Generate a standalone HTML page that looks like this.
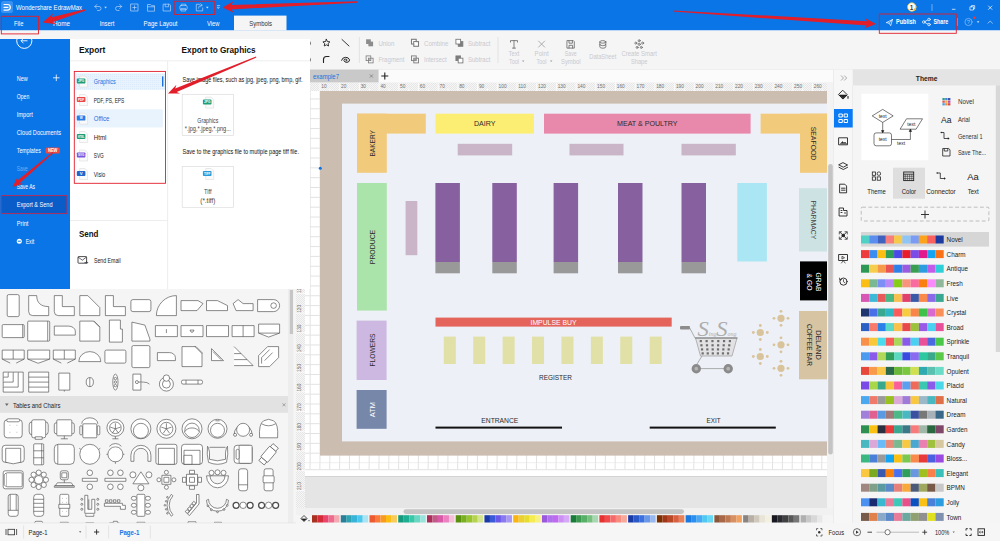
<!DOCTYPE html>
<html><head><meta charset="utf-8"><title>Wondershare EdrawMax</title>
<style>*{margin:0;padding:0}html,body{width:1000px;height:541px;overflow:hidden;background:#f5f5f5;font-family:"Liberation Sans",sans-serif}text{white-space:pre}</style>
</head><body>
<svg width="1000" height="541" viewBox="0 0 1000 541" font-family="'Liberation Sans', sans-serif" style="position:absolute;left:0;top:0;display:block">
<rect x="0.00" y="0.00" width="1000.00" height="541.00" fill="#f5f5f5"/>
<rect x="0.00" y="0.00" width="1000.00" height="30.00" fill="#0a75e7"/>
<rect x="0.00" y="30.00" width="1000.00" height="39.00" fill="#f5f5f5"/>
<rect x="0.00" y="30.00" width="1000.00" height="1.00" fill="#bcd7f6"/>
<rect x="234.00" y="15.60" width="52.50" height="14.90" fill="#f5f5f5"/>
<rect x="310.00" y="69.00" width="690.00" height="0.60" fill="#dcdcdc"/>
<rect x="305.00" y="69.60" width="528.00" height="13.00" fill="#fbfbfb"/>
<rect x="310.00" y="69.60" width="68.60" height="13.00" fill="#c9c9c9"/>
<text x="313.00" y="76.20" font-size="7" fill="#1a6fe0" textLength="26.00" lengthAdjust="spacingAndGlyphs" dominant-baseline="central">example7</text>
<path d="M369.8 74.400l3.200 3.200M373 74.400l-3.200 3.200" stroke="#666" stroke-width="0.6" fill="none"/>
<path d="M381.300 76h7M384.800 72.500v7" stroke="#222" stroke-width="1.1" fill="none"/>
<pattern id="rdot" width="2" height="2" patternUnits="userSpaceOnUse"><rect width="2" height="2" fill="#f6f6f6"/><rect width="1" height="1" fill="#e6e6e6"/><rect x="1" y="1" width="1" height="1" fill="#e6e6e6"/></pattern>
<rect x="305.00" y="82.60" width="522.00" height="8.40" fill="url(#rdot)"/>
<line x1="320.00" y1="83.00" x2="320.00" y2="91.00" stroke="#fdfdfd" stroke-width="0.9"/>
<line x1="329.85" y1="88.50" x2="329.85" y2="91.00" stroke="#fdfdfd" stroke-width="0.9"/>
<text x="321.30" y="86.40" font-size="5.3" fill="#707070" textLength="5.31" lengthAdjust="spacingAndGlyphs" dominant-baseline="central">10</text>
<line x1="339.70" y1="83.00" x2="339.70" y2="91.00" stroke="#fdfdfd" stroke-width="0.9"/>
<line x1="349.55" y1="88.50" x2="349.55" y2="91.00" stroke="#fdfdfd" stroke-width="0.9"/>
<text x="341.00" y="86.40" font-size="5.3" fill="#707070" textLength="5.31" lengthAdjust="spacingAndGlyphs" dominant-baseline="central">20</text>
<line x1="359.40" y1="83.00" x2="359.40" y2="91.00" stroke="#fdfdfd" stroke-width="0.9"/>
<line x1="369.25" y1="88.50" x2="369.25" y2="91.00" stroke="#fdfdfd" stroke-width="0.9"/>
<text x="360.70" y="86.40" font-size="5.3" fill="#707070" textLength="5.31" lengthAdjust="spacingAndGlyphs" dominant-baseline="central">30</text>
<line x1="379.10" y1="83.00" x2="379.10" y2="91.00" stroke="#fdfdfd" stroke-width="0.9"/>
<line x1="388.95" y1="88.50" x2="388.95" y2="91.00" stroke="#fdfdfd" stroke-width="0.9"/>
<text x="380.40" y="86.40" font-size="5.3" fill="#707070" textLength="5.31" lengthAdjust="spacingAndGlyphs" dominant-baseline="central">40</text>
<line x1="398.80" y1="83.00" x2="398.80" y2="91.00" stroke="#fdfdfd" stroke-width="0.9"/>
<line x1="408.65" y1="88.50" x2="408.65" y2="91.00" stroke="#fdfdfd" stroke-width="0.9"/>
<text x="400.10" y="86.40" font-size="5.3" fill="#707070" textLength="5.31" lengthAdjust="spacingAndGlyphs" dominant-baseline="central">50</text>
<line x1="418.50" y1="83.00" x2="418.50" y2="91.00" stroke="#fdfdfd" stroke-width="0.9"/>
<line x1="428.35" y1="88.50" x2="428.35" y2="91.00" stroke="#fdfdfd" stroke-width="0.9"/>
<text x="419.80" y="86.40" font-size="5.3" fill="#707070" textLength="5.31" lengthAdjust="spacingAndGlyphs" dominant-baseline="central">60</text>
<line x1="438.20" y1="83.00" x2="438.20" y2="91.00" stroke="#fdfdfd" stroke-width="0.9"/>
<line x1="448.05" y1="88.50" x2="448.05" y2="91.00" stroke="#fdfdfd" stroke-width="0.9"/>
<text x="439.50" y="86.40" font-size="5.3" fill="#707070" textLength="5.31" lengthAdjust="spacingAndGlyphs" dominant-baseline="central">70</text>
<line x1="457.90" y1="83.00" x2="457.90" y2="91.00" stroke="#fdfdfd" stroke-width="0.9"/>
<line x1="467.75" y1="88.50" x2="467.75" y2="91.00" stroke="#fdfdfd" stroke-width="0.9"/>
<text x="459.20" y="86.40" font-size="5.3" fill="#707070" textLength="5.31" lengthAdjust="spacingAndGlyphs" dominant-baseline="central">80</text>
<line x1="477.60" y1="83.00" x2="477.60" y2="91.00" stroke="#fdfdfd" stroke-width="0.9"/>
<line x1="487.45" y1="88.50" x2="487.45" y2="91.00" stroke="#fdfdfd" stroke-width="0.9"/>
<text x="478.90" y="86.40" font-size="5.3" fill="#707070" textLength="5.31" lengthAdjust="spacingAndGlyphs" dominant-baseline="central">90</text>
<line x1="497.30" y1="83.00" x2="497.30" y2="91.00" stroke="#fdfdfd" stroke-width="0.9"/>
<line x1="507.15" y1="88.50" x2="507.15" y2="91.00" stroke="#fdfdfd" stroke-width="0.9"/>
<text x="498.60" y="86.40" font-size="5.3" fill="#707070" textLength="7.96" lengthAdjust="spacingAndGlyphs" dominant-baseline="central">100</text>
<line x1="517.00" y1="83.00" x2="517.00" y2="91.00" stroke="#fdfdfd" stroke-width="0.9"/>
<line x1="526.85" y1="88.50" x2="526.85" y2="91.00" stroke="#fdfdfd" stroke-width="0.9"/>
<text x="518.30" y="86.40" font-size="5.3" fill="#707070" textLength="7.60" lengthAdjust="spacingAndGlyphs" dominant-baseline="central">110</text>
<line x1="536.70" y1="83.00" x2="536.70" y2="91.00" stroke="#fdfdfd" stroke-width="0.9"/>
<line x1="546.55" y1="88.50" x2="546.55" y2="91.00" stroke="#fdfdfd" stroke-width="0.9"/>
<text x="538.00" y="86.40" font-size="5.3" fill="#707070" textLength="7.96" lengthAdjust="spacingAndGlyphs" dominant-baseline="central">120</text>
<line x1="556.40" y1="83.00" x2="556.40" y2="91.00" stroke="#fdfdfd" stroke-width="0.9"/>
<line x1="566.25" y1="88.50" x2="566.25" y2="91.00" stroke="#fdfdfd" stroke-width="0.9"/>
<text x="557.70" y="86.40" font-size="5.3" fill="#707070" textLength="7.96" lengthAdjust="spacingAndGlyphs" dominant-baseline="central">130</text>
<line x1="576.10" y1="83.00" x2="576.10" y2="91.00" stroke="#fdfdfd" stroke-width="0.9"/>
<line x1="585.95" y1="88.50" x2="585.95" y2="91.00" stroke="#fdfdfd" stroke-width="0.9"/>
<text x="577.40" y="86.40" font-size="5.3" fill="#707070" textLength="7.96" lengthAdjust="spacingAndGlyphs" dominant-baseline="central">140</text>
<line x1="595.80" y1="83.00" x2="595.80" y2="91.00" stroke="#fdfdfd" stroke-width="0.9"/>
<line x1="605.65" y1="88.50" x2="605.65" y2="91.00" stroke="#fdfdfd" stroke-width="0.9"/>
<text x="597.10" y="86.40" font-size="5.3" fill="#707070" textLength="7.96" lengthAdjust="spacingAndGlyphs" dominant-baseline="central">150</text>
<line x1="615.50" y1="83.00" x2="615.50" y2="91.00" stroke="#fdfdfd" stroke-width="0.9"/>
<line x1="625.35" y1="88.50" x2="625.35" y2="91.00" stroke="#fdfdfd" stroke-width="0.9"/>
<text x="616.80" y="86.40" font-size="5.3" fill="#707070" textLength="7.96" lengthAdjust="spacingAndGlyphs" dominant-baseline="central">160</text>
<line x1="635.20" y1="83.00" x2="635.20" y2="91.00" stroke="#fdfdfd" stroke-width="0.9"/>
<line x1="645.05" y1="88.50" x2="645.05" y2="91.00" stroke="#fdfdfd" stroke-width="0.9"/>
<text x="636.50" y="86.40" font-size="5.3" fill="#707070" textLength="7.96" lengthAdjust="spacingAndGlyphs" dominant-baseline="central">170</text>
<line x1="654.90" y1="83.00" x2="654.90" y2="91.00" stroke="#fdfdfd" stroke-width="0.9"/>
<line x1="664.75" y1="88.50" x2="664.75" y2="91.00" stroke="#fdfdfd" stroke-width="0.9"/>
<text x="656.20" y="86.40" font-size="5.3" fill="#707070" textLength="7.96" lengthAdjust="spacingAndGlyphs" dominant-baseline="central">180</text>
<line x1="674.60" y1="83.00" x2="674.60" y2="91.00" stroke="#fdfdfd" stroke-width="0.9"/>
<line x1="684.45" y1="88.50" x2="684.45" y2="91.00" stroke="#fdfdfd" stroke-width="0.9"/>
<text x="675.90" y="86.40" font-size="5.3" fill="#707070" textLength="7.96" lengthAdjust="spacingAndGlyphs" dominant-baseline="central">190</text>
<line x1="694.30" y1="83.00" x2="694.30" y2="91.00" stroke="#fdfdfd" stroke-width="0.9"/>
<line x1="704.15" y1="88.50" x2="704.15" y2="91.00" stroke="#fdfdfd" stroke-width="0.9"/>
<text x="695.60" y="86.40" font-size="5.3" fill="#707070" textLength="7.96" lengthAdjust="spacingAndGlyphs" dominant-baseline="central">200</text>
<line x1="714.00" y1="83.00" x2="714.00" y2="91.00" stroke="#fdfdfd" stroke-width="0.9"/>
<line x1="723.85" y1="88.50" x2="723.85" y2="91.00" stroke="#fdfdfd" stroke-width="0.9"/>
<text x="715.30" y="86.40" font-size="5.3" fill="#707070" textLength="7.96" lengthAdjust="spacingAndGlyphs" dominant-baseline="central">210</text>
<line x1="733.70" y1="83.00" x2="733.70" y2="91.00" stroke="#fdfdfd" stroke-width="0.9"/>
<line x1="743.55" y1="88.50" x2="743.55" y2="91.00" stroke="#fdfdfd" stroke-width="0.9"/>
<text x="735.00" y="86.40" font-size="5.3" fill="#707070" textLength="7.96" lengthAdjust="spacingAndGlyphs" dominant-baseline="central">220</text>
<line x1="753.40" y1="83.00" x2="753.40" y2="91.00" stroke="#fdfdfd" stroke-width="0.9"/>
<line x1="763.25" y1="88.50" x2="763.25" y2="91.00" stroke="#fdfdfd" stroke-width="0.9"/>
<text x="754.70" y="86.40" font-size="5.3" fill="#707070" textLength="7.96" lengthAdjust="spacingAndGlyphs" dominant-baseline="central">230</text>
<line x1="773.10" y1="83.00" x2="773.10" y2="91.00" stroke="#fdfdfd" stroke-width="0.9"/>
<line x1="782.95" y1="88.50" x2="782.95" y2="91.00" stroke="#fdfdfd" stroke-width="0.9"/>
<text x="774.40" y="86.40" font-size="5.3" fill="#707070" textLength="7.96" lengthAdjust="spacingAndGlyphs" dominant-baseline="central">240</text>
<line x1="792.80" y1="83.00" x2="792.80" y2="91.00" stroke="#fdfdfd" stroke-width="0.9"/>
<line x1="802.65" y1="88.50" x2="802.65" y2="91.00" stroke="#fdfdfd" stroke-width="0.9"/>
<text x="794.10" y="86.40" font-size="5.3" fill="#707070" textLength="7.96" lengthAdjust="spacingAndGlyphs" dominant-baseline="central">250</text>
<line x1="812.50" y1="83.00" x2="812.50" y2="91.00" stroke="#fdfdfd" stroke-width="0.9"/>
<line x1="822.35" y1="88.50" x2="822.35" y2="91.00" stroke="#fdfdfd" stroke-width="0.9"/>
<text x="813.80" y="86.40" font-size="5.3" fill="#707070" textLength="7.96" lengthAdjust="spacingAndGlyphs" dominant-baseline="central">260</text>
<rect x="296.00" y="91.00" width="9.00" height="417.00" fill="url(#rdot)"/>
<line x1="296.00" y1="293.30" x2="305.00" y2="293.30" stroke="#fdfdfd" stroke-width="0.9"/>
<line x1="296.00" y1="313.00" x2="305.00" y2="313.00" stroke="#fdfdfd" stroke-width="0.9"/>
<line x1="296.00" y1="332.70" x2="305.00" y2="332.70" stroke="#fdfdfd" stroke-width="0.9"/>
<line x1="296.00" y1="352.40" x2="305.00" y2="352.40" stroke="#fdfdfd" stroke-width="0.9"/>
<line x1="296.00" y1="372.10" x2="305.00" y2="372.10" stroke="#fdfdfd" stroke-width="0.9"/>
<line x1="296.00" y1="391.80" x2="305.00" y2="391.80" stroke="#fdfdfd" stroke-width="0.9"/>
<line x1="296.00" y1="411.50" x2="305.00" y2="411.50" stroke="#fdfdfd" stroke-width="0.9"/>
<line x1="296.00" y1="431.20" x2="305.00" y2="431.20" stroke="#fdfdfd" stroke-width="0.9"/>
<line x1="296.00" y1="450.90" x2="305.00" y2="450.90" stroke="#fdfdfd" stroke-width="0.9"/>
<line x1="296.00" y1="470.60" x2="305.00" y2="470.60" stroke="#fdfdfd" stroke-width="0.9"/>
<line x1="296.00" y1="490.30" x2="305.00" y2="490.30" stroke="#fdfdfd" stroke-width="0.9"/>
<rect x="827.00" y="82.00" width="6.00" height="433.00" fill="#f3f3f3"/>
<rect x="828.20" y="164.00" width="4.60" height="290.50" fill="#c4c4c4" rx="2.3"/>
<rect x="296.00" y="508.00" width="537.00" height="7.00" fill="#f1f1f1"/>
<rect x="403.50" y="509.20" width="280.50" height="4.80" fill="#c4c4c4" rx="2.4"/>
<defs><pattern id="grid" x="319.5" y="452.7" width="9.84" height="9.84" patternUnits="userSpaceOnUse"><path d="M0.5 0V9.84M0 0.5H9.84" stroke="#e2e2e2" stroke-width="1" fill="none"/></pattern></defs>
<rect x="305.00" y="91.00" width="522.00" height="385.00" fill="#fff"/>
<rect x="305.00" y="91.00" width="522.00" height="385.00" fill="url(#grid)"/>
<rect x="305.00" y="463.20" width="522.00" height="12.80" fill="#fff"/>
<rect x="305.00" y="469.20" width="522.00" height="1.00" fill="#e2e2e2"/>
<rect x="309.55" y="463.20" width="1.00" height="6.00" fill="#e2e2e2"/>
<rect x="319.39" y="463.20" width="1.00" height="6.00" fill="#e2e2e2"/>
<rect x="329.23" y="463.20" width="1.00" height="6.00" fill="#e2e2e2"/>
<rect x="339.07" y="463.20" width="1.00" height="6.00" fill="#e2e2e2"/>
<rect x="348.91" y="463.20" width="1.00" height="6.00" fill="#e2e2e2"/>
<rect x="358.75" y="463.20" width="1.00" height="6.00" fill="#e2e2e2"/>
<rect x="368.59" y="463.20" width="1.00" height="6.00" fill="#e2e2e2"/>
<rect x="378.43" y="463.20" width="1.00" height="6.00" fill="#e2e2e2"/>
<rect x="388.27" y="463.20" width="1.00" height="6.00" fill="#e2e2e2"/>
<rect x="398.11" y="463.20" width="1.00" height="6.00" fill="#e2e2e2"/>
<rect x="407.95" y="463.20" width="1.00" height="6.00" fill="#e2e2e2"/>
<rect x="417.79" y="463.20" width="1.00" height="6.00" fill="#e2e2e2"/>
<rect x="427.63" y="463.20" width="1.00" height="6.00" fill="#e2e2e2"/>
<rect x="437.47" y="463.20" width="1.00" height="6.00" fill="#e2e2e2"/>
<rect x="447.31" y="463.20" width="1.00" height="6.00" fill="#e2e2e2"/>
<rect x="457.15" y="463.20" width="1.00" height="6.00" fill="#e2e2e2"/>
<rect x="466.99" y="463.20" width="1.00" height="6.00" fill="#e2e2e2"/>
<rect x="476.83" y="463.20" width="1.00" height="6.00" fill="#e2e2e2"/>
<rect x="486.67" y="463.20" width="1.00" height="6.00" fill="#e2e2e2"/>
<rect x="496.51" y="463.20" width="1.00" height="6.00" fill="#e2e2e2"/>
<rect x="506.35" y="463.20" width="1.00" height="6.00" fill="#e2e2e2"/>
<rect x="516.19" y="463.20" width="1.00" height="6.00" fill="#e2e2e2"/>
<rect x="526.03" y="463.20" width="1.00" height="6.00" fill="#e2e2e2"/>
<rect x="535.87" y="463.20" width="1.00" height="6.00" fill="#e2e2e2"/>
<rect x="545.71" y="463.20" width="1.00" height="6.00" fill="#e2e2e2"/>
<rect x="555.55" y="463.20" width="1.00" height="6.00" fill="#e2e2e2"/>
<rect x="565.39" y="463.20" width="1.00" height="6.00" fill="#e2e2e2"/>
<rect x="575.23" y="463.20" width="1.00" height="6.00" fill="#e2e2e2"/>
<rect x="585.07" y="463.20" width="1.00" height="6.00" fill="#e2e2e2"/>
<rect x="594.91" y="463.20" width="1.00" height="6.00" fill="#e2e2e2"/>
<rect x="604.75" y="463.20" width="1.00" height="6.00" fill="#e2e2e2"/>
<rect x="614.59" y="463.20" width="1.00" height="6.00" fill="#e2e2e2"/>
<rect x="624.43" y="463.20" width="1.00" height="6.00" fill="#e2e2e2"/>
<rect x="634.27" y="463.20" width="1.00" height="6.00" fill="#e2e2e2"/>
<rect x="644.11" y="463.20" width="1.00" height="6.00" fill="#e2e2e2"/>
<rect x="653.95" y="463.20" width="1.00" height="6.00" fill="#e2e2e2"/>
<rect x="663.79" y="463.20" width="1.00" height="6.00" fill="#e2e2e2"/>
<rect x="673.63" y="463.20" width="1.00" height="6.00" fill="#e2e2e2"/>
<rect x="683.47" y="463.20" width="1.00" height="6.00" fill="#e2e2e2"/>
<rect x="693.31" y="463.20" width="1.00" height="6.00" fill="#e2e2e2"/>
<rect x="703.15" y="463.20" width="1.00" height="6.00" fill="#e2e2e2"/>
<rect x="712.99" y="463.20" width="1.00" height="6.00" fill="#e2e2e2"/>
<rect x="722.83" y="463.20" width="1.00" height="6.00" fill="#e2e2e2"/>
<rect x="732.67" y="463.20" width="1.00" height="6.00" fill="#e2e2e2"/>
<rect x="742.51" y="463.20" width="1.00" height="6.00" fill="#e2e2e2"/>
<rect x="752.35" y="463.20" width="1.00" height="6.00" fill="#e2e2e2"/>
<rect x="762.19" y="463.20" width="1.00" height="6.00" fill="#e2e2e2"/>
<rect x="772.03" y="463.20" width="1.00" height="6.00" fill="#e2e2e2"/>
<rect x="781.87" y="463.20" width="1.00" height="6.00" fill="#e2e2e2"/>
<rect x="791.71" y="463.20" width="1.00" height="6.00" fill="#e2e2e2"/>
<rect x="801.55" y="463.20" width="1.00" height="6.00" fill="#e2e2e2"/>
<rect x="811.39" y="463.20" width="1.00" height="6.00" fill="#e2e2e2"/>
<rect x="821.23" y="463.20" width="1.00" height="6.00" fill="#e2e2e2"/>
<rect x="305.00" y="476.00" width="522.00" height="32.00" fill="#e5e5e5"/>
<rect x="305.00" y="476.00" width="522.00" height="0.80" fill="#d0d0d0"/>
<rect x="320.00" y="91.00" width="507.00" height="364.60" fill="#cbbdb0"/>
<rect x="342.00" y="103.60" width="485.00" height="337.80" fill="#edf0f6"/>
<rect x="357.00" y="113.70" width="68.80" height="19.90" fill="#f2ca7c"/>
<rect x="357.00" y="113.70" width="29.80" height="59.10" fill="#f2ca7c"/>
<rect x="435.50" y="113.70" width="98.50" height="19.90" fill="#fcee72"/>
<rect x="544.00" y="113.70" width="206.60" height="19.90" fill="#e888ab"/>
<rect x="760.60" y="113.70" width="66.40" height="19.90" fill="#f2ca7c"/>
<rect x="800.00" y="113.70" width="27.00" height="59.10" fill="#f2ca7c"/>
<rect x="457.70" y="143.80" width="54.50" height="11.60" fill="#cab4c8"/>
<rect x="569.50" y="143.80" width="54.00" height="11.60" fill="#cab4c8"/>
<rect x="681.50" y="143.80" width="54.30" height="11.60" fill="#cab4c8"/>
<rect x="357.00" y="183.00" width="29.80" height="127.60" fill="#abe4ab"/>
<rect x="405.60" y="201.00" width="11.70" height="54.20" fill="#cab4c8"/>
<rect x="435.40" y="183.00" width="24.50" height="79.00" fill="#87609f"/>
<rect x="435.40" y="262.00" width="24.50" height="11.30" fill="#999"/>
<rect x="492.30" y="183.00" width="24.50" height="79.00" fill="#87609f"/>
<rect x="492.30" y="262.00" width="24.50" height="11.30" fill="#999"/>
<rect x="553.60" y="183.00" width="24.50" height="79.00" fill="#87609f"/>
<rect x="553.60" y="262.00" width="24.50" height="11.30" fill="#999"/>
<rect x="618.00" y="183.00" width="24.50" height="79.00" fill="#87609f"/>
<rect x="618.00" y="262.00" width="24.50" height="11.30" fill="#999"/>
<rect x="681.50" y="183.00" width="24.50" height="79.00" fill="#87609f"/>
<rect x="681.50" y="262.00" width="24.50" height="11.30" fill="#999"/>
<rect x="737.30" y="183.00" width="29.60" height="78.50" fill="#abe6f4"/>
<rect x="799.00" y="188.20" width="28.00" height="63.30" fill="#cde3e3"/>
<rect x="800.00" y="261.40" width="27.00" height="39.00" fill="#000"/>
<rect x="799.00" y="311.00" width="28.00" height="68.30" fill="#d6c4a2"/>
<rect x="356.60" y="320.60" width="30.00" height="59.40" fill="#cdb8e2"/>
<rect x="356.60" y="390.00" width="30.00" height="38.80" fill="#7687a9"/>
<rect x="435.50" y="317.60" width="236.20" height="9.00" fill="#e4645b"/>
<rect x="443.80" y="336.60" width="12.00" height="27.40" fill="#e1e0a6"/>
<rect x="473.21" y="336.60" width="12.00" height="27.40" fill="#e1e0a6"/>
<rect x="502.62" y="336.60" width="12.00" height="27.40" fill="#e1e0a6"/>
<rect x="532.03" y="336.60" width="12.00" height="27.40" fill="#e1e0a6"/>
<rect x="561.44" y="336.60" width="12.00" height="27.40" fill="#e1e0a6"/>
<rect x="590.85" y="336.60" width="12.00" height="27.40" fill="#e1e0a6"/>
<rect x="620.26" y="336.60" width="12.00" height="27.40" fill="#e1e0a6"/>
<rect x="649.67" y="336.60" width="12.00" height="27.40" fill="#e1e0a6"/>
<rect x="435.50" y="426.60" width="126.50" height="2.00" fill="#111"/>
<rect x="649.70" y="426.60" width="126.10" height="2.00" fill="#111"/>
<text x="484.70" y="123.60" font-size="7.5" fill="#2b2b2b" textLength="21.50" lengthAdjust="spacingAndGlyphs" dominant-baseline="central" text-anchor="middle">DAIRY</text>
<text x="647.30" y="123.60" font-size="7.5" fill="#2b2b2b" textLength="60.50" lengthAdjust="spacingAndGlyphs" dominant-baseline="central" text-anchor="middle">MEAT &amp; POULTRY</text>
<text x="372.30" y="143.30" font-size="7.5" fill="#2b2b2b" textLength="26.40" lengthAdjust="spacingAndGlyphs" dominant-baseline="central" text-anchor="middle" transform="rotate(-90 372.30 143.30)">BAKERY</text>
<text x="813.50" y="143.50" font-size="7.5" fill="#2b2b2b" textLength="33.70" lengthAdjust="spacingAndGlyphs" dominant-baseline="central" text-anchor="middle" transform="rotate(90 813.50 143.50)">SEAFOOD</text>
<text x="372.30" y="247.00" font-size="7.5" fill="#2b2b2b" textLength="34.40" lengthAdjust="spacingAndGlyphs" dominant-baseline="central" text-anchor="middle" transform="rotate(-90 372.30 247.00)">PRODUCE</text>
<text x="813.50" y="219.90" font-size="7.5" fill="#444" textLength="38.80" lengthAdjust="spacingAndGlyphs" dominant-baseline="central" text-anchor="middle" transform="rotate(90 813.50 219.90)">PHARMACY</text>
<text x="372.30" y="350.00" font-size="7.5" fill="#2b2b2b" textLength="33.00" lengthAdjust="spacingAndGlyphs" dominant-baseline="central" text-anchor="middle" transform="rotate(-90 372.30 350.00)">FLOWERS</text>
<text x="372.30" y="409.70" font-size="7.5" fill="#fff" textLength="15.00" lengthAdjust="spacingAndGlyphs" dominant-baseline="central" text-anchor="middle" transform="rotate(-90 372.30 409.70)">ATM</text>
<text x="553.50" y="322.20" font-size="7" fill="#fff" textLength="46.00" lengthAdjust="spacingAndGlyphs" dominant-baseline="central" text-anchor="middle">IMPULSE BUY</text>
<text x="555.50" y="377.00" font-size="7" fill="#2b2b2b" textLength="33.00" lengthAdjust="spacingAndGlyphs" dominant-baseline="central" text-anchor="middle">REGISTER</text>
<text x="499.80" y="420.50" font-size="7" fill="#2b2b2b" textLength="37.00" lengthAdjust="spacingAndGlyphs" dominant-baseline="central" text-anchor="middle">ENTRANCE</text>
<text x="713.50" y="420.50" font-size="7" fill="#2b2b2b" textLength="14.00" lengthAdjust="spacingAndGlyphs" dominant-baseline="central" text-anchor="middle">EXIT</text>
<text x="818.50" y="282.00" font-size="7" fill="#fff" textLength="19.00" lengthAdjust="spacingAndGlyphs" dominant-baseline="central" text-anchor="middle" transform="rotate(90 818.50 282.00)">GRAB</text>
<text x="809.30" y="282.00" font-size="7" fill="#fff" textLength="17.00" lengthAdjust="spacingAndGlyphs" dominant-baseline="central" text-anchor="middle" transform="rotate(90 809.30 282.00)">&amp; GO</text>
<text x="818.50" y="345.00" font-size="7.2" fill="#2b2b2b" textLength="29.70" lengthAdjust="spacingAndGlyphs" dominant-baseline="central" text-anchor="middle" transform="rotate(90 818.50 345.00)">DELAND</text>
<text x="809.20" y="345.00" font-size="7.2" fill="#2b2b2b" textLength="42.00" lengthAdjust="spacingAndGlyphs" dominant-baseline="central" text-anchor="middle" transform="rotate(90 809.20 345.00)">COFFEE BAR</text>
<circle cx="760.30" cy="332.50" r="3.60" fill="#d9c39a"/>
<circle cx="753.30" cy="332.50" r="1.40" fill="#d9c39a"/>
<circle cx="767.30" cy="332.50" r="1.40" fill="#d9c39a"/>
<circle cx="760.30" cy="325.50" r="1.40" fill="#d9c39a"/>
<circle cx="760.30" cy="339.50" r="1.40" fill="#d9c39a"/>
<circle cx="760.30" cy="356.50" r="3.60" fill="#d9c39a"/>
<circle cx="753.30" cy="356.50" r="1.40" fill="#d9c39a"/>
<circle cx="767.30" cy="356.50" r="1.40" fill="#d9c39a"/>
<circle cx="760.30" cy="349.50" r="1.40" fill="#d9c39a"/>
<circle cx="760.30" cy="363.50" r="1.40" fill="#d9c39a"/>
<circle cx="781.00" cy="318.30" r="3.60" fill="#d9c39a"/>
<circle cx="774.00" cy="318.30" r="1.40" fill="#d9c39a"/>
<circle cx="788.00" cy="318.30" r="1.40" fill="#d9c39a"/>
<circle cx="781.00" cy="311.30" r="1.40" fill="#d9c39a"/>
<circle cx="781.00" cy="325.30" r="1.40" fill="#d9c39a"/>
<circle cx="781.00" cy="344.80" r="3.60" fill="#d9c39a"/>
<circle cx="774.00" cy="344.80" r="1.40" fill="#d9c39a"/>
<circle cx="788.00" cy="344.80" r="1.40" fill="#d9c39a"/>
<circle cx="781.00" cy="337.80" r="1.40" fill="#d9c39a"/>
<circle cx="781.00" cy="351.80" r="1.40" fill="#d9c39a"/>
<circle cx="781.00" cy="368.30" r="3.60" fill="#d9c39a"/>
<circle cx="774.00" cy="368.30" r="1.40" fill="#d9c39a"/>
<circle cx="788.00" cy="368.30" r="1.40" fill="#d9c39a"/>
<circle cx="781.00" cy="361.30" r="1.40" fill="#d9c39a"/>
<circle cx="781.00" cy="375.30" r="1.40" fill="#d9c39a"/>
<rect x="680.00" y="326.00" width="10.00" height="3.60" fill="#8c8c8c" rx="1"/>
<path d="M689.500 327.500l5.500 10.500M702 356l-5 8M696 368.600h32" stroke="#999" stroke-width="0.8" fill="none"/>
<path d="M695.500 338h41.500l-5 18h-31.500z" stroke="#9a9a9a" stroke-width="0.7" fill="#e2e2e4"/>
<path d="M695 338h42.500" stroke="#7a7a7a" stroke-width="1.2" fill="none"/>
<rect x="699.70" y="340.00" width="2.20" height="2.20" fill="#6e6e6e"/>
<rect x="705.52" y="340.00" width="2.20" height="2.20" fill="#6e6e6e"/>
<rect x="711.34" y="340.00" width="2.20" height="2.20" fill="#6e6e6e"/>
<rect x="717.16" y="340.00" width="2.20" height="2.20" fill="#6e6e6e"/>
<rect x="722.98" y="340.00" width="2.20" height="2.20" fill="#6e6e6e"/>
<rect x="728.80" y="340.00" width="2.20" height="2.20" fill="#6e6e6e"/>
<rect x="700.32" y="344.20" width="2.20" height="2.20" fill="#6e6e6e"/>
<rect x="705.89" y="344.20" width="2.20" height="2.20" fill="#6e6e6e"/>
<rect x="711.46" y="344.20" width="2.20" height="2.20" fill="#6e6e6e"/>
<rect x="717.03" y="344.20" width="2.20" height="2.20" fill="#6e6e6e"/>
<rect x="722.60" y="344.20" width="2.20" height="2.20" fill="#6e6e6e"/>
<rect x="728.17" y="344.20" width="2.20" height="2.20" fill="#6e6e6e"/>
<rect x="700.95" y="348.30" width="2.20" height="2.20" fill="#6e6e6e"/>
<rect x="706.27" y="348.30" width="2.20" height="2.20" fill="#6e6e6e"/>
<rect x="711.59" y="348.30" width="2.20" height="2.20" fill="#6e6e6e"/>
<rect x="716.91" y="348.30" width="2.20" height="2.20" fill="#6e6e6e"/>
<rect x="722.23" y="348.30" width="2.20" height="2.20" fill="#6e6e6e"/>
<rect x="727.55" y="348.30" width="2.20" height="2.20" fill="#6e6e6e"/>
<rect x="701.57" y="352.30" width="2.20" height="2.20" fill="#6e6e6e"/>
<rect x="706.64" y="352.30" width="2.20" height="2.20" fill="#6e6e6e"/>
<rect x="711.71" y="352.30" width="2.20" height="2.20" fill="#6e6e6e"/>
<rect x="716.78" y="352.30" width="2.20" height="2.20" fill="#6e6e6e"/>
<rect x="721.85" y="352.30" width="2.20" height="2.20" fill="#6e6e6e"/>
<rect x="726.92" y="352.30" width="2.20" height="2.20" fill="#6e6e6e"/>
<circle cx="696.30" cy="368.70" r="4.70" fill="#8a8a8a"/>
<circle cx="696.30" cy="368.70" r="1.90" fill="#b4b4b4"/>
<circle cx="728.20" cy="368.70" r="4.70" fill="#8a8a8a"/>
<circle cx="728.20" cy="368.70" r="1.90" fill="#b4b4b4"/>
<text x="697.500" y="335.500" font-size="21" fill="#adadad" font-family="'Liberation Serif', serif" font-style="italic" textLength="39" lengthAdjust="spacingAndGlyphs">S<tspan font-size="5.500">ing</tspan>S<tspan font-size="5.500">ong</tspan></text>
<circle cx="320.30" cy="168.30" r="1.50" fill="#0b73e5"/>
<text x="16.00" y="7.50" font-size="7.2" fill="#fff" textLength="66.00" lengthAdjust="spacingAndGlyphs" dominant-baseline="central">Wondershare EdrawMax</text>
<text x="14.00" y="23.30" font-size="7.2" fill="#fff" textLength="9.40" lengthAdjust="spacingAndGlyphs" dominant-baseline="central">File</text>
<text x="53.00" y="23.30" font-size="7.2" fill="#fff" textLength="17.00" lengthAdjust="spacingAndGlyphs" dominant-baseline="central">Home</text>
<text x="99.70" y="23.30" font-size="7.2" fill="#fff" textLength="14.80" lengthAdjust="spacingAndGlyphs" dominant-baseline="central">Insert</text>
<text x="143.50" y="23.30" font-size="7.2" fill="#fff" textLength="34.00" lengthAdjust="spacingAndGlyphs" dominant-baseline="central">Page Layout</text>
<text x="207.00" y="23.30" font-size="7.2" fill="#fff" textLength="12.50" lengthAdjust="spacingAndGlyphs" dominant-baseline="central">View</text>
<text x="249.30" y="23.30" font-size="7.2" fill="#333" textLength="22.70" lengthAdjust="spacingAndGlyphs" dominant-baseline="central">Symbols</text>
<text x="896.00" y="21.80" font-size="7" fill="#fff" textLength="20.00" lengthAdjust="spacingAndGlyphs" dominant-baseline="central" font-weight="bold">Publish</text>
<text x="933.50" y="21.80" font-size="7" fill="#fff" textLength="14.80" lengthAdjust="spacingAndGlyphs" dominant-baseline="central" font-weight="bold">Share</text>
<g fill="none" stroke="#b6d4f8" stroke-width="0.7" stroke-linecap="round" stroke-linejoin="round">
<rect x="1" y="1" width="12" height="12" rx="2.500" fill="#3a93f2" stroke="none"/>
<path d="M4 4.500h3.500a2.800 2.800 0 0 1 0 5.600H4M4 7.300h4" stroke="#fff" stroke-width="1.200"/>
<path d="M95 6.500h4a2 2 0 0 1 0 4h-1.500M96.800 4.500l-2 2l2 2"/>
<path d="M104.300 6.800h2.600l-1.300 1.600z" fill="#d4e6fb" stroke="none"/>
<path d="M121.500 6.500h-4a2 2 0 0 0 0 4h1.500M119.700 4.500l2 2l-2 2"/>
<rect x="131" y="4" width="7" height="7"/><path d="M134.500 5.800v3.400M132.800 7.500h3.400"/>
<path d="M147.500 10.800v-6.300h3l1 1.200h3v5.100zM147.500 6.800h7"/>
<path d="M163.500 4.200h6l1 1v5.800h-7zM165.200 4.200v2.600h3.400v-2.600"/>
<rect x="179.800" y="5.600" width="7.400" height="4" rx="1.200"/><path d="M181.300 5.600v-1.400h4.400v1.400M181.300 8.400h4.400v2.600h-4.400z"/>
<path d="M199.500 4.300h-3.200v6.600h6.400v-3M198.600 8.200c0-2 1.200-3 3.400-3M200.600 3.800l1.600 1.400l-1.600 1.400"/>
<path d="M206 6.800h2.600l-1.300 1.600z" fill="#d4e6fb" stroke="none"/>
<path d="M217.300 5.500h2.400M217.600 7.200h1.800l-0.900 1.200z" stroke-width="0.700"/>
<circle cx="911.800" cy="7" r="4.200" fill="#fff" stroke="#f3c34a" stroke-width="0.800"/>
<path d="M914 8l2.500 1.500l-2.500 1.500z" fill="#f3b73a" stroke="none"/>
<path d="M932 4.500v6" stroke-width="0.600"/>
<path d="M952.300 9.300h2.800" stroke="#fff"/>
<rect x="970.300" y="6.800" width="3.200" height="3.200" stroke="#fff" stroke-width="0.700"/><path d="M971.500 6.800v-1.200h3.200v3.200h-1.200" stroke="#fff" stroke-width="0.700"/>
<path d="M988.500 6l3.400 3.400M991.900 6l-3.400 3.400" stroke="#fff"/>
<path d="M886.500 22.500l6-3l-1.800 6.200l-1.600-2.400zM889.100 23.300l3.400-3.800" stroke="#fff" stroke-width="0.700"/>
<circle cx="923.800" cy="22" r="1.300" stroke="#fff" stroke-width="0.700"/><circle cx="929" cy="19.500" r="1.300" stroke="#fff" stroke-width="0.700"/><circle cx="929" cy="24.500" r="1.300" stroke="#fff" stroke-width="0.700"/><path d="M925 21.400l2.800-1.400M925 22.600l2.800 1.400" stroke="#fff" stroke-width="0.700"/>
<path d="M957.300 18.500v7" stroke-width="0.500"/>
<circle cx="968.500" cy="22" r="3.600" stroke="#8fc0f6" stroke-width="0.700"/>
<circle cx="974.500" cy="17.800" r="1.200" fill="#f03a3a" stroke="none"/>
<path d="M976.800 21.300h2.600l-1.300 1.600z" fill="#d4e6fb" stroke="none"/>
<path d="M988 23.200l2.200-2.200l2.200 2.200" stroke-width="0.800"/>
</g>
<text x="968.50" y="22.20" font-size="6" fill="#8fc0f6" textLength="3.34" lengthAdjust="spacingAndGlyphs" dominant-baseline="central" text-anchor="middle">?</text>
<text x="911.60" y="7.20" font-size="6.5" fill="#333" textLength="3.62" lengthAdjust="spacingAndGlyphs" dominant-baseline="central" font-weight="bold" text-anchor="middle">1</text>
<g fill="none" stroke="#222" stroke-width="0.9" stroke-linejoin="round" stroke-linecap="round">
<path d="M326.400 39.300l1.050 2.250l2.450 0.300l-1.800 1.700l0.450 2.450l-2.150-1.200l-2.150 1.200l0.450-2.450l-1.800-1.700l2.450-0.300z"/>
<path d="M342 39.500l7 6.500"/>
<path d="M323.500 62.500v-3a3 3 0 0 1 3-3h2.500" stroke-width="1.100"/>
<path d="M341.600 60.300a4.100 3.500 0 0 1 8 -0.400a2.900 2.600 0 0 1 -5.700 0.500a1.700 1.500 0 0 1 3.300 -0.300a0.800 0.700 0 0 1 -1.500 0.200" stroke-width="1"/>
<path d="M308.700 41a2.500 2.500 0 0 1 0 4.500M308.700 57.500a2.500 2.500 0 0 1 0 4.500" stroke-width="1.100"/>
</g>
<line x1="359.40" y1="37.00" x2="359.40" y2="63.00" stroke="#ddd" stroke-width="0.7"/>
<line x1="498.00" y1="37.00" x2="498.00" y2="63.00" stroke="#ddd" stroke-width="0.7"/>
<rect x="366.10" y="39.30" width="4.70" height="4.70" fill="#8c8c8c"/>
<rect x="368.40" y="41.60" width="4.70" height="4.70" fill="#8c8c8c"/>
<rect x="366.10" y="55.90" width="4.70" height="4.70" fill="none" stroke="#7c7c7c" stroke-width="0.8"/>
<rect x="368.40" y="58.20" width="4.70" height="4.70" fill="none" stroke="#7c7c7c" stroke-width="0.8"/>
<line x1="368.40" y1="60.60" x2="370.80" y2="58.20" stroke="#7c7c7c" stroke-width="0.6"/>
<rect x="411.50" y="39.30" width="4.70" height="4.70" fill="#fff" stroke="#7c7c7c" stroke-width="1.1"/>
<rect x="413.80" y="41.60" width="4.70" height="4.70" fill="#fff" stroke="#7c7c7c" stroke-width="1.1"/>
<rect x="414.40" y="42.20" width="1.20" height="1.20" fill="#fff"/>
<rect x="411.50" y="55.90" width="4.70" height="4.70" fill="none" stroke="#7c7c7c" stroke-width="0.9"/>
<rect x="413.80" y="58.20" width="4.70" height="4.70" fill="none" stroke="#7c7c7c" stroke-width="0.9"/>
<rect x="413.80" y="58.20" width="2.40" height="2.40" fill="#999"/>
<rect x="458.20" y="41.60" width="4.70" height="4.70" fill="#7c7c7c" stroke="#7c7c7c" stroke-width="0.8"/>
<rect x="455.90" y="39.30" width="4.70" height="4.70" fill="#fff" stroke="#7c7c7c" stroke-width="0.9"/>
<rect x="455.90" y="55.90" width="4.70" height="4.70" fill="#7c7c7c" stroke="#7c7c7c" stroke-width="0.8"/>
<rect x="458.20" y="58.20" width="4.70" height="4.70" fill="#fff" stroke="#7c7c7c" stroke-width="0.9"/>
<text x="378.40" y="43.00" font-size="7" fill="#c9c9cf" textLength="16.00" lengthAdjust="spacingAndGlyphs" dominant-baseline="central">Union</text>
<text x="378.40" y="59.60" font-size="7" fill="#c9c9cf" textLength="26.00" lengthAdjust="spacingAndGlyphs" dominant-baseline="central">Fragment</text>
<text x="424.00" y="43.00" font-size="7" fill="#c9c9cf" textLength="24.40" lengthAdjust="spacingAndGlyphs" dominant-baseline="central">Combine</text>
<text x="424.00" y="59.60" font-size="7" fill="#c9c9cf" textLength="22.60" lengthAdjust="spacingAndGlyphs" dominant-baseline="central">Intersect</text>
<text x="468.00" y="43.00" font-size="7" fill="#c9c9cf" textLength="22.40" lengthAdjust="spacingAndGlyphs" dominant-baseline="central">Subtract</text>
<text x="468.00" y="59.60" font-size="7" fill="#c9c9cf" textLength="22.40" lengthAdjust="spacingAndGlyphs" dominant-baseline="central">Subtract</text>
<text x="514.00" y="53.20" font-size="6.6" fill="#c9c9cf" textLength="11.00" lengthAdjust="spacingAndGlyphs" dominant-baseline="central" text-anchor="middle">Text</text>
<text x="514.00" y="61.20" font-size="6.6" fill="#c9c9cf" textLength="10.00" lengthAdjust="spacingAndGlyphs" dominant-baseline="central" text-anchor="middle">Tool</text>
<text x="541.60" y="53.20" font-size="6.6" fill="#c9c9cf" textLength="14.00" lengthAdjust="spacingAndGlyphs" dominant-baseline="central" text-anchor="middle">Point</text>
<text x="541.60" y="61.20" font-size="6.6" fill="#c9c9cf" textLength="10.00" lengthAdjust="spacingAndGlyphs" dominant-baseline="central" text-anchor="middle">Tool</text>
<text x="570.80" y="53.20" font-size="6.6" fill="#c9c9cf" textLength="12.00" lengthAdjust="spacingAndGlyphs" dominant-baseline="central" text-anchor="middle">Save</text>
<text x="570.80" y="61.20" font-size="6.6" fill="#c9c9cf" textLength="19.50" lengthAdjust="spacingAndGlyphs" dominant-baseline="central" text-anchor="middle">Symbol</text>
<text x="602.80" y="56.40" font-size="6.6" fill="#c9c9cf" textLength="27.00" lengthAdjust="spacingAndGlyphs" dominant-baseline="central" text-anchor="middle">DataSheet</text>
<text x="639.20" y="53.20" font-size="6.6" fill="#c9c9cf" textLength="35.50" lengthAdjust="spacingAndGlyphs" dominant-baseline="central" text-anchor="middle">Create Smart</text>
<text x="639.20" y="61.20" font-size="6.6" fill="#c9c9cf" textLength="16.50" lengthAdjust="spacingAndGlyphs" dominant-baseline="central" text-anchor="middle">Shape</text>
<path d="M522 60.600h2.400l-1.200 1.500z" stroke="none" stroke-width="0.7" fill="#999"/>
<path d="M550 60.600h2.400l-1.200 1.500z" stroke="none" stroke-width="0.7" fill="#999"/>
<g transform="translate(0 1.100)" fill="none" stroke="#666" stroke-width="0.800" stroke-linecap="round" stroke-linejoin="round">
<path d="M510.500 41v-1.500h7v1.500M514 39.500v7.500M512.500 47h3"/>
<path d="M538.600 40l6 6M544.600 40l-6 6" stroke="#999"/>
<path d="M567.300 39.500h6l1 1v6.500h-7zM569 39.500v2.600h3.400v-2.600M569 47v-2.800h3.600v2.800"/>
<ellipse cx="602.800" cy="40.800" rx="3" ry="1.300"/><path d="M599.800 40.800v5a3 1.300 0 0 0 6 0v-5M599.800 43.300a3 1.300 0 0 0 6 0"/>
<circle cx="639.200" cy="43.200" r="1.100"/><circle cx="639.200" cy="39.600" r="1"/><circle cx="642.600" cy="42" r="1"/><circle cx="635.800" cy="42" r="1"/><circle cx="641.300" cy="46.300" r="1"/><circle cx="637.100" cy="46.300" r="1"/>
</g>
<rect x="833.00" y="69.60" width="167.00" height="453.40" fill="#f5f5f5"/>
<rect x="834.00" y="69.60" width="18.70" height="453.40" fill="#f7f7f7"/>
<rect x="852.30" y="85.40" width="0.60" height="437.60" fill="#e6e6e6"/>
<rect x="833.20" y="69.60" width="0.60" height="453.40" fill="#e6e6e6"/>
<rect x="852.70" y="69.60" width="147.30" height="15.80" fill="#e4e4e4"/>
<text x="926.60" y="78.40" font-size="7.8" fill="#222" textLength="21.60" lengthAdjust="spacingAndGlyphs" dominant-baseline="central" font-weight="bold" text-anchor="middle">Theme</text>
<path d="M841 75.500l2.500 2.500l-2.500 2.500M844.200 75.500l2.500 2.500l-2.500 2.500" stroke="#888" stroke-width="0.7" fill="none"/>
<rect x="834.00" y="109.00" width="18.70" height="18.50" fill="#0a7af5"/>
<g fill="none" stroke="#222" stroke-width="0.9" stroke-linejoin="round" stroke-linecap="round">
<path d="M843 90.500l4.300 4.300l-4.300 4.300l-4.300-4.300zM839.500 95.500h7" /><path d="M839.800 95.200h6.600l-3.400 3.400z" fill="#222"/><path d="M848 96.500v1.800" stroke-width="1.100"/>
<g stroke="#fff" stroke-width="1"><rect x="839.300" y="114" width="3" height="3"/><rect x="844.500" y="114" width="3" height="3"/><rect x="839.300" y="119.500" width="3" height="3"/><rect x="844.500" y="119.500" width="3" height="3"/></g>
<rect x="839" y="137.800" width="8.500" height="7"/><path d="M840.500 143.500l2-2l1.500 1.500l1-1l1.500 1.500z" fill="#222" stroke-width="0.400"/>
<g transform="translate(0 3.300)"><path d="M843.300 159.500l4.300 2.200l-4.300 2.200l-4.300-2.200zM839 164l4.300 2.200l4.300-2.200"/></g>
<g transform="translate(0 4.200)"><path d="M840 180h4.800l1.800 1.800v6.800h-6.600zM841.500 184h3.600M841.500 186h3.600"/></g>
<g transform="translate(0 9)"><path d="M839.500 199h4v2.500h3.500v5.500h-7.500zM841 201.500h1M841 203.500h1M844.500 204h1"/></g>
<g transform="translate(0 9.200)"><path d="M840 223l6.500 6.500M846.500 223l-6.500 6.500"/><circle cx="843.250" cy="226.250" r="1.300" fill="#222"/><path d="M839.300 224.800v-2.300h2.300M845 222.500h2.300v2.300M847.300 227.800v2.300h-2.300M841.600 230.100h-2.300v-2.300" stroke-width="0.700"/></g>
<g transform="translate(0 10)"><rect x="839" y="244.500" width="8.500" height="6"/><path d="M841.500 253l1.800-2.400l1.800 2.400M842.300 246.500l2.200 1.200l-2.200 1.200z" stroke-width="0.700"/></g>
<g transform="translate(0 11.600)"><circle cx="843.500" cy="270" r="3.600"/><path d="M843.500 268v2.200l1.500 1M839.500 266.500l0.200 2l1.800-0.500" stroke-width="0.700"/></g>
</g>
<rect x="861.40" y="93.70" width="66.90" height="66.50" fill="#fff"/>
<g fill="#fff" stroke="#222" stroke-width="0.600" stroke-linejoin="round">
<path d="M882.700 109.400l10.500 6.500l-10.500 6.500l-10.500-6.500z"/>
<rect x="874" y="132.900" width="17.500" height="12.900" rx="2.200"/>
<path d="M906.500 118.800h16l-6.400 10.400h-16z"/>
<path d="M882.700 122.400v8.500M891.500 139.500h18.900v-8.500" fill="none"/>
<path d="M881.500 130.500h2.400l-1.200 2.400zM909.200 131.500h2.400l-1.200-2.500z" fill="#222"/>
</g>
<text x="882.70" y="115.90" font-size="5.2" fill="#222" textLength="8.00" lengthAdjust="spacingAndGlyphs" dominant-baseline="central" text-anchor="middle">text</text>
<text x="911.30" y="124.00" font-size="5.2" fill="#222" textLength="8.00" lengthAdjust="spacingAndGlyphs" dominant-baseline="central" text-anchor="middle">text</text>
<text x="882.70" y="139.40" font-size="5.2" fill="#222" textLength="8.00" lengthAdjust="spacingAndGlyphs" dominant-baseline="central" text-anchor="middle">text</text>
<text x="901.10" y="143.00" font-size="5.2" fill="#222" textLength="8.00" lengthAdjust="spacingAndGlyphs" dominant-baseline="central" text-anchor="middle">text</text>
<rect x="942.40" y="98.00" width="2.40" height="2.20" fill="#2f9e8f"/>
<rect x="945.20" y="98.00" width="2.40" height="2.20" fill="#4a7de0"/>
<rect x="948.00" y="98.00" width="2.40" height="2.20" fill="#3a55b0"/>
<rect x="942.40" y="100.60" width="2.40" height="2.20" fill="#e05a5a"/>
<rect x="945.20" y="100.60" width="2.40" height="2.20" fill="#f0b040"/>
<rect x="948.00" y="100.60" width="2.40" height="2.20" fill="#c04aa0"/>
<rect x="942.40" y="103.20" width="2.40" height="2.20" fill="#4aa0e0"/>
<rect x="945.20" y="103.20" width="2.40" height="2.20" fill="#f08a30"/>
<rect x="948.00" y="103.20" width="2.40" height="2.20" fill="#d04a4a"/>
<text x="957.90" y="101.90" font-size="7" fill="#333" textLength="16.00" lengthAdjust="spacingAndGlyphs" dominant-baseline="central">Novel</text>
<text x="941.00" y="119.60" font-size="9" fill="#222" textLength="10.50" lengthAdjust="spacingAndGlyphs" dominant-baseline="central">Aa</text>
<text x="957.90" y="119.40" font-size="7" fill="#333" textLength="12.00" lengthAdjust="spacingAndGlyphs" dominant-baseline="central">Arial</text>
<path d="M941.500 132.500h2.500v6h4.500" stroke="#222" stroke-width="0.8" fill="none"/>
<path d="M947.800 137.300l1.800 1.200l-1.800 1.200z" stroke="none" stroke-width="0.7" fill="#222"/>
<circle cx="941.30" cy="132.50" r="0.80" fill="#222"/>
<text x="957.90" y="136.00" font-size="7" fill="#333" textLength="24.70" lengthAdjust="spacingAndGlyphs" dominant-baseline="central">General 1</text>
<path d="M942.700 148.500h6l1.300 1.300v6.200h-7.300zM944.200 148.500v2.500h3.600v-2.500" stroke="#222" stroke-width="0.8" fill="none"/>
<text x="957.90" y="152.50" font-size="7" fill="#333" textLength="28.20" lengthAdjust="spacingAndGlyphs" dominant-baseline="central">Save The...</text>
<rect x="893.00" y="167.70" width="32.00" height="31.00" fill="#dedede"/>
<g fill="none" stroke="#222" stroke-width="0.8">
<rect x="872.300" y="172" width="3.300" height="3.300"/><rect x="877.200" y="172" width="3.300" height="3.300" rx="1.200"/><rect x="872.300" y="176.900" width="3.300" height="3.300"/><rect x="877.200" y="176.900" width="3.300" height="3.300"/>
<rect x="903.700" y="172" width="10" height="8.600" stroke-width="0.900"/><path d="M903.700 174.200h10" /><path d="M905.300 174.200v6.400M907.400 174.200v6.400M909.600 174.200v6.400M911.800 174.200v6.400M903.700 176.300h10M903.700 178.500h10" stroke-width="0.500"/>
<path d="M937.500 173h2.800v5.500h4.200"/>
</g>
<path d="M944 177.300l1.800 1.200l-1.800 1.200z" stroke="none" stroke-width="0.7" fill="#222"/>
<circle cx="937.20" cy="173.00" r="0.80" fill="#222"/>
<text x="973.00" y="176.00" font-size="9.5" fill="#222" textLength="11.50" lengthAdjust="spacingAndGlyphs" dominant-baseline="central" text-anchor="middle">Aa</text>
<text x="876.60" y="191.20" font-size="7" fill="#222" textLength="18.50" lengthAdjust="spacingAndGlyphs" dominant-baseline="central" text-anchor="middle">Theme</text>
<text x="908.90" y="191.20" font-size="7" fill="#222" textLength="14.50" lengthAdjust="spacingAndGlyphs" dominant-baseline="central" text-anchor="middle">Color</text>
<text x="941.00" y="191.20" font-size="7" fill="#222" textLength="29.50" lengthAdjust="spacingAndGlyphs" dominant-baseline="central" text-anchor="middle">Connector</text>
<text x="973.20" y="191.20" font-size="7" fill="#222" textLength="11.00" lengthAdjust="spacingAndGlyphs" dominant-baseline="central" text-anchor="middle">Text</text>
<rect x="861.20" y="207.20" width="127.70" height="13.80" fill="none" stroke="#a8a8a8" stroke-width="0.7" rx="1" stroke-dasharray="3.800 2.400"/>
<path d="M921 214.500h8M925 210.500v8" stroke="#333" stroke-width="1" fill="none"/>
<rect x="861.00" y="232.00" width="128.00" height="14.60" fill="#d6d6d6"/>
<rect x="861.00" y="235.50" width="8.27" height="8.00" fill="#4fd1c5"/>
<rect x="869.27" y="235.50" width="8.27" height="8.00" fill="#5b8def"/>
<rect x="877.54" y="235.50" width="8.27" height="8.00" fill="#4062bf"/>
<rect x="885.81" y="235.50" width="8.27" height="8.00" fill="#f87d7d"/>
<rect x="894.08" y="235.50" width="8.27" height="8.00" fill="#f7c948"/>
<rect x="902.35" y="235.50" width="8.27" height="8.00" fill="#8ec5f5"/>
<rect x="910.62" y="235.50" width="8.27" height="8.00" fill="#7b9cf2"/>
<rect x="918.89" y="235.50" width="8.27" height="8.00" fill="#fba31b"/>
<rect x="927.16" y="235.50" width="8.27" height="8.00" fill="#f96060"/>
<rect x="935.43" y="235.50" width="8.27" height="8.00" fill="#1d3aa0"/>
<text x="946.60" y="239.70" font-size="7" fill="#222" textLength="16.11" lengthAdjust="spacingAndGlyphs" dominant-baseline="central">Novel</text>
<rect x="861.00" y="250.10" width="8.27" height="8.00" fill="#ee3b3b"/>
<rect x="869.27" y="250.10" width="8.27" height="8.00" fill="#3b8def"/>
<rect x="877.54" y="250.10" width="8.27" height="8.00" fill="#fbbf14"/>
<rect x="885.81" y="250.10" width="8.27" height="8.00" fill="#2f9e5b"/>
<rect x="894.08" y="250.10" width="8.27" height="8.00" fill="#4a4ae8"/>
<rect x="902.35" y="250.10" width="8.27" height="8.00" fill="#e81c2b"/>
<rect x="910.62" y="250.10" width="8.27" height="8.00" fill="#7a4de8"/>
<rect x="918.89" y="250.10" width="8.27" height="8.00" fill="#e01a8c"/>
<rect x="927.16" y="250.10" width="8.27" height="8.00" fill="#14a4f4"/>
<rect x="935.43" y="250.10" width="8.27" height="8.00" fill="#f97316"/>
<text x="946.60" y="254.30" font-size="7" fill="#222" textLength="18.90" lengthAdjust="spacingAndGlyphs" dominant-baseline="central">Charm</text>
<rect x="861.00" y="264.70" width="8.27" height="8.00" fill="#2e9956"/>
<rect x="869.27" y="264.70" width="8.27" height="8.00" fill="#f7cd4f"/>
<rect x="877.54" y="264.70" width="8.27" height="8.00" fill="#f49a4a"/>
<rect x="885.81" y="264.70" width="8.27" height="8.00" fill="#e85454"/>
<rect x="894.08" y="264.70" width="8.27" height="8.00" fill="#2e7fe8"/>
<rect x="902.35" y="264.70" width="8.27" height="8.00" fill="#9a5be0"/>
<rect x="910.62" y="264.70" width="8.27" height="8.00" fill="#3a9e50"/>
<rect x="918.89" y="264.70" width="8.27" height="8.00" fill="#2e9de0"/>
<rect x="927.16" y="264.70" width="8.27" height="8.00" fill="#c25be8"/>
<rect x="935.43" y="264.70" width="8.27" height="8.00" fill="#2ecfd8"/>
<text x="946.60" y="268.90" font-size="7" fill="#222" textLength="21.37" lengthAdjust="spacingAndGlyphs" dominant-baseline="central">Antique</text>
<rect x="861.00" y="279.30" width="8.27" height="8.00" fill="#fbbf14"/>
<rect x="869.27" y="279.30" width="8.27" height="8.00" fill="#79b891"/>
<rect x="877.54" y="279.30" width="8.27" height="8.00" fill="#7b8ff5"/>
<rect x="885.81" y="279.30" width="8.27" height="8.00" fill="#b98af5"/>
<rect x="894.08" y="279.30" width="8.27" height="8.00" fill="#84cc16"/>
<rect x="902.35" y="279.30" width="8.27" height="8.00" fill="#f9937b"/>
<rect x="910.62" y="279.30" width="8.27" height="8.00" fill="#f96a9e"/>
<rect x="918.89" y="279.30" width="8.27" height="8.00" fill="#f97f0e"/>
<rect x="927.16" y="279.30" width="8.27" height="8.00" fill="#f98af9"/>
<rect x="935.43" y="279.30" width="8.27" height="8.00" fill="#8fb89a"/>
<text x="946.60" y="283.50" font-size="7" fill="#222" textLength="16.10" lengthAdjust="spacingAndGlyphs" dominant-baseline="central">Fresh</text>
<rect x="861.00" y="293.90" width="8.27" height="8.00" fill="#d957b4"/>
<rect x="869.27" y="293.90" width="8.27" height="8.00" fill="#3cb9d6"/>
<rect x="877.54" y="293.90" width="8.27" height="8.00" fill="#e85a5a"/>
<rect x="885.81" y="293.90" width="8.27" height="8.00" fill="#4ab884"/>
<rect x="894.08" y="293.90" width="8.27" height="8.00" fill="#f7c04f"/>
<rect x="902.35" y="293.90" width="8.27" height="8.00" fill="#e0406a"/>
<rect x="910.62" y="293.90" width="8.27" height="8.00" fill="#3a5aa8"/>
<rect x="918.89" y="293.90" width="8.27" height="8.00" fill="#f98a4a"/>
<rect x="927.16" y="293.90" width="8.27" height="8.00" fill="#8a6ae8"/>
<rect x="935.43" y="293.90" width="8.27" height="8.00" fill="#3aa890"/>
<text x="946.60" y="298.10" font-size="7" fill="#222" textLength="11.56" lengthAdjust="spacingAndGlyphs" dominant-baseline="central">Live</text>
<rect x="861.00" y="308.50" width="8.27" height="8.00" fill="#1f3570"/>
<rect x="869.27" y="308.50" width="8.27" height="8.00" fill="#4a70e8"/>
<rect x="877.54" y="308.50" width="8.27" height="8.00" fill="#3aa890"/>
<rect x="885.81" y="308.50" width="8.27" height="8.00" fill="#2fb8c4"/>
<rect x="894.08" y="308.50" width="8.27" height="8.00" fill="#f95a5a"/>
<rect x="902.35" y="308.50" width="8.27" height="8.00" fill="#f7cd3f"/>
<rect x="910.62" y="308.50" width="8.27" height="8.00" fill="#f9854a"/>
<rect x="918.89" y="308.50" width="8.27" height="8.00" fill="#3ec24a"/>
<rect x="927.16" y="308.50" width="8.27" height="8.00" fill="#d96ad0"/>
<rect x="935.43" y="308.50" width="8.27" height="8.00" fill="#f9905a"/>
<text x="946.60" y="312.70" font-size="7" fill="#222" textLength="19.60" lengthAdjust="spacingAndGlyphs" dominant-baseline="central">Crystal</text>
<rect x="861.00" y="323.10" width="8.27" height="8.00" fill="#2a5fc4"/>
<rect x="869.27" y="323.10" width="8.27" height="8.00" fill="#f97a6a"/>
<rect x="877.54" y="323.10" width="8.27" height="8.00" fill="#2a80e8"/>
<rect x="885.81" y="323.10" width="8.27" height="8.00" fill="#5ad8c8"/>
<rect x="894.08" y="323.10" width="8.27" height="8.00" fill="#f9c04a"/>
<rect x="902.35" y="323.10" width="8.27" height="8.00" fill="#e8484a"/>
<rect x="910.62" y="323.10" width="8.27" height="8.00" fill="#9ac23a"/>
<rect x="918.89" y="323.10" width="8.27" height="8.00" fill="#9a5ae8"/>
<rect x="927.16" y="323.10" width="8.27" height="8.00" fill="#4ad0f0"/>
<rect x="935.43" y="323.10" width="8.27" height="8.00" fill="#e8509a"/>
<text x="946.60" y="327.30" font-size="7" fill="#222" textLength="16.81" lengthAdjust="spacingAndGlyphs" dominant-baseline="central">Broad</text>
<rect x="861.00" y="337.70" width="8.27" height="8.00" fill="#f9904a"/>
<rect x="869.27" y="337.70" width="8.27" height="8.00" fill="#f9c83a"/>
<rect x="877.54" y="337.70" width="8.27" height="8.00" fill="#4adcec"/>
<rect x="885.81" y="337.70" width="8.27" height="8.00" fill="#f95a5a"/>
<rect x="894.08" y="337.70" width="8.27" height="8.00" fill="#a8d85a"/>
<rect x="902.35" y="337.70" width="8.27" height="8.00" fill="#8a5ae8"/>
<rect x="910.62" y="337.70" width="8.27" height="8.00" fill="#4ad0f0"/>
<rect x="918.89" y="337.70" width="8.27" height="8.00" fill="#e8509a"/>
<rect x="927.16" y="337.70" width="8.27" height="8.00" fill="#4a68e0"/>
<rect x="935.43" y="337.70" width="8.27" height="8.00" fill="#4ac84a"/>
<text x="946.60" y="341.90" font-size="7" fill="#222" textLength="22.76" lengthAdjust="spacingAndGlyphs" dominant-baseline="central">Sprinkle</text>
<rect x="861.00" y="352.30" width="8.27" height="8.00" fill="#4a9af0"/>
<rect x="869.27" y="352.30" width="8.27" height="8.00" fill="#8a5ae8"/>
<rect x="877.54" y="352.30" width="8.27" height="8.00" fill="#b0d85a"/>
<rect x="885.81" y="352.30" width="8.27" height="8.00" fill="#2e9e5a"/>
<rect x="894.08" y="352.30" width="8.27" height="8.00" fill="#5ad8c0"/>
<rect x="902.35" y="352.30" width="8.27" height="8.00" fill="#3a4ae0"/>
<rect x="910.62" y="352.30" width="8.27" height="8.00" fill="#8a6af0"/>
<rect x="918.89" y="352.30" width="8.27" height="8.00" fill="#2ec8a0"/>
<rect x="927.16" y="352.30" width="8.27" height="8.00" fill="#3aa88a"/>
<rect x="935.43" y="352.30" width="8.27" height="8.00" fill="#5ac84a"/>
<text x="946.60" y="356.50" font-size="7" fill="#222" textLength="22.53" lengthAdjust="spacingAndGlyphs" dominant-baseline="central">Tranquil</text>
<rect x="861.00" y="366.90" width="8.27" height="8.00" fill="#e8483a"/>
<rect x="869.27" y="366.90" width="8.27" height="8.00" fill="#f99a4a"/>
<rect x="877.54" y="366.90" width="8.27" height="8.00" fill="#f9c84a"/>
<rect x="885.81" y="366.90" width="8.27" height="8.00" fill="#2a6a4a"/>
<rect x="894.08" y="366.90" width="8.27" height="8.00" fill="#6ab83a"/>
<rect x="902.35" y="366.90" width="8.27" height="8.00" fill="#7ac840"/>
<rect x="910.62" y="366.90" width="8.27" height="8.00" fill="#d0e050"/>
<rect x="918.89" y="366.90" width="8.27" height="8.00" fill="#2eaab0"/>
<rect x="927.16" y="366.90" width="8.27" height="8.00" fill="#5ac0b0"/>
<rect x="935.43" y="366.90" width="8.27" height="8.00" fill="#6adcc8"/>
<text x="946.60" y="371.10" font-size="7" fill="#222" textLength="22.07" lengthAdjust="spacingAndGlyphs" dominant-baseline="central">Opulent</text>
<rect x="861.00" y="381.50" width="8.27" height="8.00" fill="#7a4ae8"/>
<rect x="869.27" y="381.50" width="8.27" height="8.00" fill="#a8d84a"/>
<rect x="877.54" y="381.50" width="8.27" height="8.00" fill="#3aa88a"/>
<rect x="885.81" y="381.50" width="8.27" height="8.00" fill="#f9c03a"/>
<rect x="894.08" y="381.50" width="8.27" height="8.00" fill="#f9609a"/>
<rect x="902.35" y="381.50" width="8.27" height="8.00" fill="#5aa0f0"/>
<rect x="910.62" y="381.50" width="8.27" height="8.00" fill="#f06a5a"/>
<rect x="918.89" y="381.50" width="8.27" height="8.00" fill="#3ac8b0"/>
<rect x="927.16" y="381.50" width="8.27" height="8.00" fill="#8a5ae8"/>
<rect x="935.43" y="381.50" width="8.27" height="8.00" fill="#4ad8e8"/>
<text x="946.60" y="385.70" font-size="7" fill="#222" textLength="17.16" lengthAdjust="spacingAndGlyphs" dominant-baseline="central">Placid</text>
<rect x="861.00" y="396.10" width="8.27" height="8.00" fill="#4aa8f0"/>
<rect x="869.27" y="396.10" width="8.27" height="8.00" fill="#f07a6a"/>
<rect x="877.54" y="396.10" width="8.27" height="8.00" fill="#9a9a9a"/>
<rect x="885.81" y="396.10" width="8.27" height="8.00" fill="#98c020"/>
<rect x="894.08" y="396.10" width="8.27" height="8.00" fill="#dca8d8"/>
<rect x="902.35" y="396.10" width="8.27" height="8.00" fill="#a07ad8"/>
<rect x="910.62" y="396.10" width="8.27" height="8.00" fill="#f9c840"/>
<rect x="918.89" y="396.10" width="8.27" height="8.00" fill="#9ab8c8"/>
<rect x="927.16" y="396.10" width="8.27" height="8.00" fill="#4ab8c0"/>
<rect x="935.43" y="396.10" width="8.27" height="8.00" fill="#e0704a"/>
<text x="946.60" y="400.30" font-size="7" fill="#222" textLength="20.31" lengthAdjust="spacingAndGlyphs" dominant-baseline="central">Natural</text>
<rect x="861.00" y="410.70" width="8.27" height="8.00" fill="#a080d8"/>
<rect x="869.27" y="410.70" width="8.27" height="8.00" fill="#e06090"/>
<rect x="877.54" y="410.70" width="8.27" height="8.00" fill="#5a9ae0"/>
<rect x="885.81" y="410.70" width="8.27" height="8.00" fill="#a07878"/>
<rect x="894.08" y="410.70" width="8.27" height="8.00" fill="#4ab888"/>
<rect x="902.35" y="410.70" width="8.27" height="8.00" fill="#4ab8c0"/>
<rect x="910.62" y="410.70" width="8.27" height="8.00" fill="#3a50a0"/>
<rect x="918.89" y="410.70" width="8.27" height="8.00" fill="#787878"/>
<rect x="927.16" y="410.70" width="8.27" height="8.00" fill="#a8b0b8"/>
<rect x="935.43" y="410.70" width="8.27" height="8.00" fill="#3a6888"/>
<text x="946.60" y="414.90" font-size="7" fill="#222" textLength="18.90" lengthAdjust="spacingAndGlyphs" dominant-baseline="central">Dream</text>
<rect x="861.00" y="425.30" width="8.27" height="8.00" fill="#2e9050"/>
<rect x="869.27" y="425.30" width="8.27" height="8.00" fill="#fbc014"/>
<rect x="877.54" y="425.30" width="8.27" height="8.00" fill="#2a3040"/>
<rect x="885.81" y="425.30" width="8.27" height="8.00" fill="#e83a3a"/>
<rect x="894.08" y="425.30" width="8.27" height="8.00" fill="#3aa890"/>
<rect x="902.35" y="425.30" width="8.27" height="8.00" fill="#3a7888"/>
<rect x="910.62" y="425.30" width="8.27" height="8.00" fill="#f97a7a"/>
<rect x="918.89" y="425.30" width="8.27" height="8.00" fill="#a0b8a8"/>
<rect x="927.16" y="425.30" width="8.27" height="8.00" fill="#2a6840"/>
<rect x="935.43" y="425.30" width="8.27" height="8.00" fill="#804868"/>
<text x="946.60" y="429.50" font-size="7" fill="#222" textLength="21.01" lengthAdjust="spacingAndGlyphs" dominant-baseline="central">Garden</text>
<rect x="861.00" y="439.90" width="8.27" height="8.00" fill="#4ab8c0"/>
<rect x="869.27" y="439.90" width="8.27" height="8.00" fill="#dca8d8"/>
<rect x="877.54" y="439.90" width="8.27" height="8.00" fill="#6abcf8"/>
<rect x="885.81" y="439.90" width="8.27" height="8.00" fill="#e88a7a"/>
<rect x="894.08" y="439.90" width="8.27" height="8.00" fill="#7ab890"/>
<rect x="902.35" y="439.90" width="8.27" height="8.00" fill="#f9c840"/>
<rect x="910.62" y="439.90" width="8.27" height="8.00" fill="#4aa8d0"/>
<rect x="918.89" y="439.90" width="8.27" height="8.00" fill="#e880b0"/>
<rect x="927.16" y="439.90" width="8.27" height="8.00" fill="#a0c040"/>
<rect x="935.43" y="439.90" width="8.27" height="8.00" fill="#d8c8a0"/>
<text x="946.60" y="444.10" font-size="7" fill="#222" textLength="18.21" lengthAdjust="spacingAndGlyphs" dominant-baseline="central">Candy</text>
<rect x="861.00" y="454.50" width="8.27" height="8.00" fill="#3ab880"/>
<rect x="869.27" y="454.50" width="8.27" height="8.00" fill="#4a80d8"/>
<rect x="877.54" y="454.50" width="8.27" height="8.00" fill="#9a9a9a"/>
<rect x="885.81" y="454.50" width="8.27" height="8.00" fill="#14a4f4"/>
<rect x="894.08" y="454.50" width="8.27" height="8.00" fill="#fbc014"/>
<rect x="902.35" y="454.50" width="8.27" height="8.00" fill="#7ac850"/>
<rect x="910.62" y="454.50" width="8.27" height="8.00" fill="#f98a4a"/>
<rect x="918.89" y="454.50" width="8.27" height="8.00" fill="#e83a3a"/>
<rect x="927.16" y="454.50" width="8.27" height="8.00" fill="#4a60e0"/>
<rect x="935.43" y="454.50" width="8.27" height="8.00" fill="#9a4ae0"/>
<text x="946.60" y="458.70" font-size="7" fill="#222" textLength="20.66" lengthAdjust="spacingAndGlyphs" dominant-baseline="central">Bloss...</text>
<rect x="861.00" y="469.10" width="8.27" height="8.00" fill="#f9c840"/>
<rect x="869.27" y="469.10" width="8.27" height="8.00" fill="#7aa820"/>
<rect x="877.54" y="469.10" width="8.27" height="8.00" fill="#3a58b0"/>
<rect x="885.81" y="469.10" width="8.27" height="8.00" fill="#f97f0e"/>
<rect x="894.08" y="469.10" width="8.27" height="8.00" fill="#4a70f0"/>
<rect x="902.35" y="469.10" width="8.27" height="8.00" fill="#2e9e5a"/>
<rect x="910.62" y="469.10" width="8.27" height="8.00" fill="#6a98e0"/>
<rect x="918.89" y="469.10" width="8.27" height="8.00" fill="#a0c020"/>
<rect x="927.16" y="469.10" width="8.27" height="8.00" fill="#f9804a"/>
<rect x="935.43" y="469.10" width="8.27" height="8.00" fill="#3ac0b8"/>
<text x="946.60" y="473.30" font-size="7" fill="#222" textLength="21.37" lengthAdjust="spacingAndGlyphs" dominant-baseline="central">Elegant</text>
<rect x="861.00" y="483.70" width="8.27" height="8.00" fill="#a08880"/>
<rect x="869.27" y="483.70" width="8.27" height="8.00" fill="#80a088"/>
<rect x="877.54" y="483.70" width="8.27" height="8.00" fill="#5a9aa0"/>
<rect x="885.81" y="483.70" width="8.27" height="8.00" fill="#5a8ac8"/>
<rect x="894.08" y="483.70" width="8.27" height="8.00" fill="#e8807a"/>
<rect x="902.35" y="483.70" width="8.27" height="8.00" fill="#f9a83a"/>
<rect x="910.62" y="483.70" width="8.27" height="8.00" fill="#4a5a78"/>
<rect x="918.89" y="483.70" width="8.27" height="8.00" fill="#a0a860"/>
<rect x="927.16" y="483.70" width="8.27" height="8.00" fill="#785a48"/>
<rect x="935.43" y="483.70" width="8.27" height="8.00" fill="#c8c8c8"/>
<text x="946.60" y="487.90" font-size="7" fill="#222" textLength="18.20" lengthAdjust="spacingAndGlyphs" dominant-baseline="central">BPMN</text>
<rect x="861.00" y="498.30" width="8.27" height="8.00" fill="#4a90f0"/>
<rect x="869.27" y="498.30" width="8.27" height="8.00" fill="#1a2a70"/>
<rect x="877.54" y="498.30" width="8.27" height="8.00" fill="#3ab8d0"/>
<rect x="885.81" y="498.30" width="8.27" height="8.00" fill="#e87a9a"/>
<rect x="894.08" y="498.30" width="8.27" height="8.00" fill="#3ac8b8"/>
<rect x="902.35" y="498.30" width="8.27" height="8.00" fill="#e8508a"/>
<rect x="910.62" y="498.30" width="8.27" height="8.00" fill="#0a50c0"/>
<rect x="918.89" y="498.30" width="8.27" height="8.00" fill="#fbc014"/>
<rect x="927.16" y="498.30" width="8.27" height="8.00" fill="#4a80d8"/>
<rect x="935.43" y="498.30" width="8.27" height="8.00" fill="#2e9de0"/>
<text x="946.60" y="502.50" font-size="7" fill="#222" textLength="12.60" lengthAdjust="spacingAndGlyphs" dominant-baseline="central">Jolly</text>
<rect x="861.00" y="512.90" width="8.27" height="8.00" fill="#785a48"/>
<rect x="869.27" y="512.90" width="8.27" height="8.00" fill="#e0804a"/>
<rect x="877.54" y="512.90" width="8.27" height="8.00" fill="#8aa8c8"/>
<rect x="885.81" y="512.90" width="8.27" height="8.00" fill="#5a8ac8"/>
<rect x="894.08" y="512.90" width="8.27" height="8.00" fill="#e87a9a"/>
<rect x="902.35" y="512.90" width="8.27" height="8.00" fill="#6aa8a0"/>
<rect x="910.62" y="512.90" width="8.27" height="8.00" fill="#90a070"/>
<rect x="918.89" y="512.90" width="8.27" height="8.00" fill="#909090"/>
<rect x="927.16" y="512.90" width="8.27" height="8.00" fill="#e0e020"/>
<rect x="935.43" y="512.90" width="8.27" height="8.00" fill="#8090b0"/>
<text x="946.60" y="517.10" font-size="7" fill="#222" textLength="14.71" lengthAdjust="spacingAndGlyphs" dominant-baseline="central">Town</text>
<rect x="995.80" y="85.40" width="4.20" height="266.60" fill="#d8d8d8"/>
<rect x="0.00" y="289.00" width="296.00" height="234.00" fill="#f5f5f5"/>
<rect x="0.00" y="396.00" width="288.00" height="16.80" fill="#e2e2e2"/>
<path d="M5 403.500h3.600l-1.800 2.600z" stroke="none" stroke-width="0.7" fill="#666"/>
<text x="13.00" y="405.00" font-size="6.8" fill="#222" textLength="47.40" lengthAdjust="spacingAndGlyphs" dominant-baseline="central">Tables and Chairs</text>
<path d="M282.500 403.300l3 3M285.500 403.300l-3 3" stroke="#777" stroke-width="0.6" fill="none"/>
<rect x="288.00" y="289.00" width="5.40" height="234.00" fill="#ededed"/>
<rect x="289.80" y="290.00" width="3.20" height="44.00" fill="#c6c6c6"/>
<clipPath id="libc"><rect x="0" y="289" width="288" height="234"/></clipPath>
<g clip-path="url(#libc)" fill="#fff" stroke="#4d4d4d" stroke-width="0.650" stroke-linejoin="round">
<g transform="translate(13.2 305.6)"><rect x="-6" y="-11" width="12" height="22" rx="1.5"/></g>
<g transform="translate(38.7 305.6)"><path d="M-10 -10h8c0 7 4 11 12 11v9h-16q-4 0-4-4z"/></g>
<g transform="translate(64.3 305.6)"><path d="M-10 -10h8v11h12v9h-16q-4 0-4-4z"/></g>
<g transform="translate(89.8 305.6)"><path d="M-10 -10h8l12 12v8h-20z"/></g>
<g transform="translate(115.4 305.6)"><path d="M-10 -10h8v11h12v9h-20z"/></g>
<g transform="translate(140.9 305.6)"><rect x="-10" y="-6" width="20" height="12" rx="2"/></g>
<g transform="translate(166.4 305.6)"><path d="M10 -10v20h-20a20 20 0 0 1 20-20z"/></g>
<g transform="translate(192.0 305.6)"><path d="M-11 -5h17l5 3l-6 7h-16z"/></g>
<g transform="translate(217.5 305.6)"><path d="M-11 -5h11l10 5v5h-21z"/></g>
<g transform="translate(243.1 305.6)"><path d="M-10 -2l5-4l5 4h10v7h-17z"/></g>
<g transform="translate(268.6 305.6)"><path d="M-11 -6h16a6 6 0 0 1 0 12h-16z"/><circle cx="5" cy="0" r="2.8"/></g>
<g transform="translate(13.2 331.1)"><rect x="-11" y="-6.5" width="22" height="13" rx="1"/><path d="M9.500 -6.500v13"/></g>
<g transform="translate(38.7 331.1)"><rect x="-11" y="-10" width="22" height="20" rx="1"/><path d="M9 -10v20"/></g>
<g transform="translate(64.3 331.1)"><path d="M-10 -5h14a7 5 0 0 1 7 5v4h-21z"/></g>
<g transform="translate(89.8 331.1)"><path d="M-10 -10h14l6 6v14h-20z"/><path d="M4 -10l6 6"/></g>
<g transform="translate(115.4 331.1)"><path d="M-6 -11h11v9h2v13h-13z"/></g>
<g transform="translate(140.9 331.1)"><path d="M-9 -9l13 3l5 14v2h-18z"/></g>
<g transform="translate(166.4 331.1)"><rect x="-11" y="-5.5" width="22" height="11" rx="0"/><path d="M0 -2v4"/></g>
<g transform="translate(192.0 331.1)"><rect x="-11" y="-5.5" width="22" height="11" rx="0"/><path d="M-2 -1h4l-1 2h-2z"/></g>
<g transform="translate(217.5 331.1)"><rect x="-11" y="-5.5" width="22" height="11" rx="0"/></g>
<g transform="translate(243.1 331.1)"><rect x="-11" y="-5.5" width="22" height="11" rx="0"/><path d="M0 -5.500v11"/></g>
<g transform="translate(268.6 331.1)"><path d="M-10 -7h21v9h-21zM-10 2l10 4l11-4"/></g>
<g transform="translate(13.2 356.6)"><path d="M-11 -6.500h22v9h-22zM0 -6.500v9M-11 2.500l8 4M11 2.500l-8 4"/></g>
<g transform="translate(38.7 356.6)"><path d="M-11 -6.500h22v9h-22zM-11 2.500l10 4l1 0l11-4"/></g>
<g transform="translate(64.3 356.6)"><path d="M-11 -6.500h22v9h-22zM0 -6.500v9M-11 2.500l8 4M11 2.500l-8 4"/></g>
<g transform="translate(89.8 356.6)"><path d="M-11 5a11 10 0 0 1 22 0z"/></g>
<g transform="translate(115.4 356.6)"><rect x="-10.5" y="-6.5" width="21" height="13" rx="1.5"/></g>
<g transform="translate(140.9 356.6)"><rect x="-9" y="-11" width="18" height="22" rx="1.5"/></g>
<g transform="translate(166.4 356.6)"><path d="M-9 -4h12a6 5 0 0 1 6 5v3h-18z"/></g>
<g transform="translate(192.0 356.6)"><path d="M-10 -10h14l6 6v14h-20z"/><path d="M3 -10l7 7"/></g>
<g transform="translate(217.5 356.6)"><path d="M-6 -8l12 12h-12z"/><path d="M-4.500 -5l8 8"/></g>
<g transform="translate(243.1 356.6)"><path d="M-9 -10l19 19h-19"/><path d="M-9 -3h7M-9 3h13"/></g>
<g transform="translate(268.6 356.6)"><path d="M-1 -10h11v11l-9 9h-11v-11z"/><path d="M1 -7l-8 8v6M4 -4l-8 8"/></g>
<g transform="translate(13.2 382.1)"><rect x="-10" y="-10" width="20" height="20" rx="0"/><path d="M-10 -5h5v-5M-10 0h10v-10M-10 5h15v-15"/></g>
<g transform="translate(38.7 382.1)"><rect x="-10" y="-10" width="20" height="20" rx="0"/><path d="M-10 -5h20M-10 0h20M-10 5h20"/></g>
<g transform="translate(64.3 382.1)"><rect x="-5.5" y="-9" width="11" height="17" rx="0"/><path d="M0 8v1.500"/></g>
<g transform="translate(89.8 382.1)"><ellipse cx="0" cy="0" rx="3.6" ry="4.5"/><path d="M0 -4.500v9"/></g>
<g transform="translate(115.4 382.1)"><ellipse cx="0" cy="0" rx="2.6" ry="8"/><circle cx="0" cy="-3.5" r="1.2"/><circle cx="0" cy="0" r="1.2"/><circle cx="0" cy="3.5" r="1.2"/></g>
<g transform="translate(140.9 382.1)"><rect x="-8" y="-8" width="8" height="16" rx="0"/><circle cx="-4" cy="0" r="1.5"/><path d="M-2.500 0h5q4 0 6 2"/></g>
<g transform="translate(166.4 382.1)"><circle cx="0" cy="2" r="7"/><circle cx="0" cy="2" r="4"/><circle cx="0" cy="-4" r="3.2"/></g>
<g transform="translate(192.0 382.1)"><rect x="-10.5" y="-2" width="21" height="4" rx="1.5"/><path d="M-6 -2v4M6 -2v4"/></g>
<g transform="translate(13.2 428.8)"><rect x="-9" y="-9" width="18" height="18" rx="3"/><rect x="-6.5" y="-10" width="13" height="3" rx="1.5"/><path d="M-3.500 -3.500h0.500M3.500 -3.500h0.500M-3.500 3.500h0.500M3.500 3.500h0.500"/></g>
<g transform="translate(38.7 428.8)"><rect x="-9.5" y="-7" width="19" height="13" rx="3"/><rect x="-7" y="-9" width="14" height="18" rx="2"/><rect x="-3.5" y="8" width="7" height="2.5" rx="0"/></g>
<g transform="translate(64.3 428.8)"><rect x="-10" y="-6" width="20" height="11" rx="2"/><rect x="-7.5" y="-9" width="15" height="16" rx="1"/><path d="M0 7v3M-3.500 10h7"/></g>
<g transform="translate(89.8 428.8)"><path d="M-8 -5a8 6 0 0 1 16 0"/><rect x="-7" y="-5" width="14" height="14" rx="1"/><rect x="-10" y="-3" width="2.5" height="9" rx="1"/><rect x="7.5" y="-3" width="2.5" height="9" rx="1"/></g>
<g transform="translate(115.4 428.8)"><circle cx="0" cy="-1" r="8.5"/><circle cx="0" cy="-1" r="5.8"/><path d="M0 0v-5.500M0 0l5.200 -1.700M0 0l3.200 4.500M0 0l-3.200 4.500M0 0l-5.200 -1.700"/><path d="M0 7.500v2.500M-3 10h6"/></g>
<g transform="translate(140.9 428.8)"><circle cx="0" cy="0" r="10"/><circle cx="0" cy="2" r="7.5"/></g>
<g transform="translate(166.4 428.8)"><circle cx="0" cy="0" r="9.5"/><circle cx="0" cy="0" r="6.5"/><path d="M0 0v-5.500M0 0l5.200 -1.700M0 0l3.200 4.500M0 0l-3.200 4.500M0 0l-5.200 -1.700"/></g>
<g transform="translate(192.0 428.8)"><circle cx="0" cy="0" r="10"/><circle cx="0" cy="1.5" r="7.2"/><path d="M-8 4a9 9 0 0 1 16 0"/></g>
<g transform="translate(217.5 428.8)"><circle cx="0" cy="0" r="9.5"/><circle cx="0" cy="1.5" r="7"/><path d="M-2 -8h4"/></g>
<g transform="translate(243.1 428.8)"><path d="M-9 6a9 10 0 0 1 18 0"/><circle cx="0" cy="1" r="6.5"/><circle cx="-8" cy="6" r="1.5"/><circle cx="8" cy="6" r="1.5"/></g>
<g transform="translate(268.6 428.8)"><path d="M-9 9q-1-14 4-17q5-3 10 0q5 3 4 17z"/><path d="M-7 -5q7 4 14 0"/></g>
<g transform="translate(13.2 454.3)"><rect x="-11" y="-9" width="22" height="17" rx="3"/><path d="M-7.500 -6h15v14l-7.500 1.500l-7.500-1.500z"/></g>
<g transform="translate(38.7 454.3)"><rect x="-5" y="-10.5" width="10" height="21" rx="1"/><path d="M-5 -3.500h10M-5 3.500h10M3 -10.500v21"/></g>
<g transform="translate(64.3 454.3)"><rect x="-10" y="-10" width="20" height="20" rx="4"/><path d="M-6.500 -10v20"/></g>
<g transform="translate(89.8 454.3)"><circle cx="0" cy="0" r="10"/><path d="M-9 -5l-1.500-1M9 -5l1.500-1"/></g>
<g transform="translate(115.4 454.3)"><circle cx="0" cy="0" r="7.5"/><path d="M-6 -8a8 8 0 0 1 12 0M-9 0h1.500M9 0h-1.500M0 7.500v2"/></g>
<g transform="translate(140.9 454.3)"><path d="M-10 7v-6a10 10 0 0 1 20 0v6h-3v-6a7 7 0 0 0-14 0v6z"/></g>
<g transform="translate(166.4 454.3)"><rect x="-10.5" y="-10" width="21" height="20" rx="2"/><rect x="-8" y="-6" width="16" height="16" rx="0"/></g>
<g transform="translate(192.0 454.3)"><rect x="-10.5" y="-10" width="21" height="20" rx="3"/><path d="M-8 -4h16v14h-16z"/><rect x="-8" y="1" width="8" height="9" rx="0"/></g>
<g transform="translate(217.5 454.3)"><path d="M-10 -8q1 0 2 6v7q8 3 16 0v-7q1-6 2-6q1 8-1 16q-9 4-18 0q-2-8-1-16z"/><path d="M-8 -7h16"/></g>
<g transform="translate(243.1 454.3)"><rect x="-9" y="-9" width="18" height="18" rx="3"/><rect x="-4" y="-9" width="13" height="18" rx="1"/><rect x="-7" y="-5" width="3" height="10" rx="1.5"/></g>
<g transform="translate(268.6 454.3)"><g transform="rotate(40)"><rect x="-4.5" y="-7" width="9" height="14" rx="1"/><rect x="-3.5" y="-11" width="7" height="4" rx="0"/><rect x="-3.5" y="7" width="7" height="4" rx="0"/></g></g>
<g transform="translate(13.2 479.8)"><rect x="-10" y="-9" width="20" height="18" rx="2"/><rect x="-7" y="-7" width="16" height="14" rx="1"/><path d="M-7 -7l-2 2v10l2 2"/></g>
<g transform="translate(38.7 479.8)"><circle cx="0" cy="0" r="4.2"/><ellipse cx="7.2" cy="0.0" rx="2.6" ry="2.6"/><ellipse cx="5.1" cy="5.1" rx="2.6" ry="2.6"/><ellipse cx="0.0" cy="7.2" rx="2.6" ry="2.6"/><ellipse cx="-5.1" cy="5.1" rx="2.6" ry="2.6"/><ellipse cx="-7.2" cy="0.0" rx="2.6" ry="2.6"/><ellipse cx="-5.1" cy="-5.1" rx="2.6" ry="2.6"/><ellipse cx="-0.0" cy="-7.2" rx="2.6" ry="2.6"/><ellipse cx="5.1" cy="-5.1" rx="2.6" ry="2.6"/></g>
<g transform="translate(64.3 479.8)"><rect x="-4" y="-9" width="8" height="9" rx="2"/><rect x="-2.5" y="-7" width="5" height="5" rx="0"/><path d="M0 0v3M-9 6l2-3h14l2 3zM-10 6h20v1.500h-20z"/></g>
<g transform="translate(89.8 479.8)"><circle cx="0" cy="-7" r="2.8"/><circle cx="0" cy="7" r="2.8"/><rect x="-7.5" y="-1.5" width="15" height="3" rx="0"/></g>
<g transform="translate(115.4 479.8)"><circle cx="-5" cy="-7" r="2.8"/><circle cx="5" cy="-7" r="2.8"/><circle cx="-5" cy="7" r="2.8"/><circle cx="5" cy="7" r="2.8"/><rect x="-10.5" y="-1.5" width="21" height="3" rx="0"/></g>
<g transform="translate(140.9 479.8)"><circle cx="-8" cy="-5" r="3"/><circle cx="8" cy="-5" r="3"/><circle cx="0" cy="8" r="3"/><path d="M0 -8l8 12h-16z"/></g>
<g transform="translate(166.4 479.8)"><rect x="-4.5" y="-4.5" width="9" height="9" rx="0"/><rect x="-2.5" y="-2.5" width="5" height="5" rx="0"/><circle cx="0" cy="-7.5" r="2"/><circle cx="0" cy="7.5" r="2"/><circle cx="-7.5" cy="0" r="2"/><circle cx="7.5" cy="0" r="2"/></g>
<g transform="translate(192.0 479.8)"><rect x="-5.5" y="-5.5" width="11" height="11" rx="0"/><rect x="-2.5" y="-2.5" width="5" height="5" rx="0"/><rect x="-2.5" y="-9.5" width="5" height="3.5" rx="0"/><rect x="-2.5" y="6" width="5" height="3.5" rx="0"/><rect x="-9.5" y="-2.5" width="3.5" height="5" rx="0"/><rect x="6" y="-2.5" width="3.5" height="5" rx="0"/></g>
<g transform="translate(217.5 479.8)"><circle cx="-6" cy="-7" r="2.5"/><circle cx="0" cy="-7.5" r="2.5"/><circle cx="6" cy="-7" r="2.5"/><path d="M-11 -4h22a11 12 0 0 1-22 0zM-7.500 -4a7.500 8 0 0 0 15 0"/></g>
<g transform="translate(243.1 479.8)"><rect x="-4.5" y="-11" width="9" height="22" rx="2.5"/><path d="M-4.500 5h9"/></g>
<g transform="translate(268.6 479.8)"><rect x="-4.5" y="-11" width="9" height="22" rx="2"/><rect x="-5.5" y="-4" width="11" height="7" rx="1"/></g>
<g transform="translate(13.2 505.3)"><rect x="-5" y="-11" width="10" height="22" rx="2.5"/><path d="M-3 -11v16M3 -11v16M-5 5h10"/></g>
<g transform="translate(38.7 505.3)"><rect x="-5" y="-11" width="10" height="22" rx="3"/><path d="M-5 -6h10M-5 -2h10M-5 2h10M-5 6h10"/></g>
<g transform="translate(64.3 505.3)"><rect x="-4.5" y="-11" width="9" height="22" rx="1.5"/><path d="M-2 -7h0.500M2 -7h0.500M-2 -3h0.500M2 -3h0.500M-2 6h0.500M2 6h0.500"/><rect x="-5.5" y="-1" width="11" height="4" rx="0"/></g>
<g transform="translate(89.8 505.3)"><path d="M-5 -10h3v14h4v-10h3v14h-10zM-1 -6v10"/><circle cx="-8" cy="-6" r="1"/><circle cx="-8" cy="-1" r="1"/><circle cx="-8" cy="4" r="1"/><circle cx="8" cy="-6" r="1"/><circle cx="8" cy="-1" r="1"/><circle cx="8" cy="4" r="1"/><path d="M-4 9v2h8v-2"/></g>
<g transform="translate(115.4 505.3)"><path d="M-11 -2h18v2h3v4h-5v-3h-16z"/><rect x="-10" y="-5.5" width="2.5" height="2.5" rx="0"/><rect x="-6" y="-5.5" width="2.5" height="2.5" rx="0"/><rect x="-2" y="-5.5" width="2.5" height="2.5" rx="0"/><rect x="2" y="-5.5" width="2.5" height="2.5" rx="0"/></g>
<g transform="translate(140.9 505.3)"><rect x="-4" y="-11" width="8" height="22" rx="1"/><ellipse cx="-7" cy="-7" rx="2.6" ry="2"/><ellipse cx="7" cy="-7" rx="2.6" ry="2"/><ellipse cx="-7" cy="0" rx="2.6" ry="2"/><ellipse cx="7" cy="0" rx="2.6" ry="2"/><ellipse cx="-7" cy="7" rx="2.6" ry="2"/><ellipse cx="7" cy="7" rx="2.6" ry="2"/></g>
<g transform="translate(166.4 505.3)"><path d="M5 -11a16 16 0 0 0 0 22l1.500-1.500a14 14 0 0 1 0-19z"/><circle cx="1.0" cy="-8" r="0.8"/><circle cx="-0.2" cy="-4" r="0.8"/><circle cx="-1.5" cy="0" r="0.8"/><circle cx="-0.2" cy="4" r="0.8"/><circle cx="1.0" cy="8" r="0.8"/></g>
<g transform="translate(192.0 505.3)"><path d="M-4.500 8.700l9-11v-8.500h2.500v9.500l-9.500 11.500z"/><rect x="-1.400" y="-1.400" width="2.800" height="2.800" transform="translate(-4.8 6.2) rotate(-50)"/><rect x="-1.400" y="-1.400" width="2.800" height="2.800" transform="translate(-2.5 3.5) rotate(-50)"/><rect x="-1.400" y="-1.400" width="2.800" height="2.800" transform="translate(-0.3 0.7) rotate(-50)"/><rect x="-1.400" y="-1.400" width="2.800" height="2.800" transform="translate(1.9 -2.0) rotate(-50)"/></g>
<g transform="translate(217.5 505.3)"><path d="M-11 -5a11 11 0 0 0 22 0l-2 -1a8 8 0 0 1-18 0z"/><circle cx="9.7" cy="0.1" r="0.9"/><circle cx="6.5" cy="4.2" r="0.9"/><circle cx="0.0" cy="6.5" r="0.9"/><circle cx="-6.2" cy="4.5" r="0.9"/><circle cx="-9.5" cy="0.5" r="0.9"/></g>
<g transform="translate(243.1 505.3)"><g stroke-width="1.300"><circle cx="-7" cy="0" r="3"/><circle cx="7" cy="0" r="3"/></g><circle cx="0" cy="0" r="3.2"/></g>
<g transform="translate(268.6 505.3)"><g stroke-width="1.300"><circle cx="-7" cy="0" r="3"/><circle cx="7" cy="0" r="3"/></g><circle cx="0" cy="0" r="3.2"/></g>
<g transform="translate(38.7 530.8)"><rect x="-4" y="-9.5" width="8" height="12" rx="1.5"/></g>
<g transform="translate(64.3 530.8)"><rect x="-4" y="-8.5" width="8" height="12" rx="0"/></g>
<g transform="translate(89.8 530.8)"><rect x="-4" y="-8" width="8" height="12" rx="0"/></g>
<g transform="translate(115.4 530.8)"><path d="M-6 -8h4v-1.500h4v1.500h2"/></g>
<g transform="translate(140.9 530.8)"><rect x="-4" y="-8.5" width="8" height="12" rx="0"/></g>
<g transform="translate(192.0 530.8)"><rect x="-4" y="-9" width="8" height="12" rx="0"/></g>
<g transform="translate(217.5 530.8)"><rect x="-3" y="-8.5" width="7" height="12" rx="0"/></g>
</g>
<text x="298.80" y="289.10" font-size="5.3" fill="#707070" textLength="7.60" lengthAdjust="spacingAndGlyphs" dominant-baseline="central" text-anchor="middle" transform="rotate(-90 298.80 289.10)">110</text>
<text x="298.80" y="308.80" font-size="5.3" fill="#707070" textLength="7.96" lengthAdjust="spacingAndGlyphs" dominant-baseline="central" text-anchor="middle" transform="rotate(-90 298.80 308.80)">120</text>
<text x="298.80" y="328.50" font-size="5.3" fill="#707070" textLength="7.96" lengthAdjust="spacingAndGlyphs" dominant-baseline="central" text-anchor="middle" transform="rotate(-90 298.80 328.50)">130</text>
<text x="298.80" y="348.20" font-size="5.3" fill="#707070" textLength="7.96" lengthAdjust="spacingAndGlyphs" dominant-baseline="central" text-anchor="middle" transform="rotate(-90 298.80 348.20)">140</text>
<text x="298.80" y="367.90" font-size="5.3" fill="#707070" textLength="7.96" lengthAdjust="spacingAndGlyphs" dominant-baseline="central" text-anchor="middle" transform="rotate(-90 298.80 367.90)">150</text>
<text x="298.80" y="387.60" font-size="5.3" fill="#707070" textLength="7.96" lengthAdjust="spacingAndGlyphs" dominant-baseline="central" text-anchor="middle" transform="rotate(-90 298.80 387.60)">160</text>
<text x="298.80" y="407.30" font-size="5.3" fill="#707070" textLength="7.96" lengthAdjust="spacingAndGlyphs" dominant-baseline="central" text-anchor="middle" transform="rotate(-90 298.80 407.30)">170</text>
<text x="298.80" y="427.00" font-size="5.3" fill="#707070" textLength="7.96" lengthAdjust="spacingAndGlyphs" dominant-baseline="central" text-anchor="middle" transform="rotate(-90 298.80 427.00)">180</text>
<text x="298.80" y="446.70" font-size="5.3" fill="#707070" textLength="7.96" lengthAdjust="spacingAndGlyphs" dominant-baseline="central" text-anchor="middle" transform="rotate(-90 298.80 446.70)">190</text>
<text x="298.80" y="466.40" font-size="5.3" fill="#707070" textLength="7.96" lengthAdjust="spacingAndGlyphs" dominant-baseline="central" text-anchor="middle" transform="rotate(-90 298.80 466.40)">200</text>
<text x="298.80" y="486.10" font-size="5.3" fill="#707070" textLength="7.96" lengthAdjust="spacingAndGlyphs" dominant-baseline="central" text-anchor="middle" transform="rotate(-90 298.80 486.10)">210</text>
<rect x="296.00" y="515.00" width="537.00" height="8.00" fill="#f5f5f5"/>
<rect x="312.00" y="515.20" width="5.50" height="7.30" fill="#a8301e"/>
<rect x="317.50" y="515.20" width="5.50" height="7.30" fill="#d42a3a"/>
<rect x="323.00" y="515.20" width="5.50" height="7.30" fill="#e8466a"/>
<rect x="328.50" y="515.20" width="5.50" height="7.30" fill="#ee6a8e"/>
<rect x="334.00" y="515.20" width="5.50" height="7.30" fill="#f4a8b0"/>
<rect x="340.74" y="515.20" width="5.50" height="7.30" fill="#2a7f96"/>
<rect x="346.24" y="515.20" width="5.50" height="7.30" fill="#2fa3b4"/>
<rect x="351.74" y="515.20" width="5.50" height="7.30" fill="#38b4d8"/>
<rect x="357.24" y="515.20" width="5.50" height="7.30" fill="#4cc8ee"/>
<rect x="362.74" y="515.20" width="5.50" height="7.30" fill="#a8e4f4"/>
<rect x="369.48" y="515.20" width="5.50" height="7.30" fill="#ee5a30"/>
<rect x="374.98" y="515.20" width="5.50" height="7.30" fill="#f97a3a"/>
<rect x="380.48" y="515.20" width="5.50" height="7.30" fill="#f99a20"/>
<rect x="385.98" y="515.20" width="5.50" height="7.30" fill="#fbbc14"/>
<rect x="391.48" y="515.20" width="5.50" height="7.30" fill="#f9cc5a"/>
<rect x="398.22" y="515.20" width="5.50" height="7.30" fill="#169a7e"/>
<rect x="403.72" y="515.20" width="5.50" height="7.30" fill="#1eae94"/>
<rect x="409.22" y="515.20" width="5.50" height="7.30" fill="#38c8a8"/>
<rect x="414.72" y="515.20" width="5.50" height="7.30" fill="#68d8c4"/>
<rect x="420.22" y="515.20" width="5.50" height="7.30" fill="#98e4dc"/>
<rect x="426.96" y="515.20" width="5.50" height="7.30" fill="#a8305a"/>
<rect x="432.46" y="515.20" width="5.50" height="7.30" fill="#c45a88"/>
<rect x="437.96" y="515.20" width="5.50" height="7.30" fill="#d85aa8"/>
<rect x="443.46" y="515.20" width="5.50" height="7.30" fill="#ec80c0"/>
<rect x="448.96" y="515.20" width="5.50" height="7.30" fill="#f4c0d8"/>
<rect x="455.70" y="515.20" width="5.50" height="7.30" fill="#5a9010"/>
<rect x="461.20" y="515.20" width="5.50" height="7.30" fill="#78b020"/>
<rect x="466.70" y="515.20" width="5.50" height="7.30" fill="#98c430"/>
<rect x="472.20" y="515.20" width="5.50" height="7.30" fill="#b4d450"/>
<rect x="477.70" y="515.20" width="5.50" height="7.30" fill="#d4e490"/>
<rect x="484.44" y="515.20" width="5.50" height="7.30" fill="#1a3aa8"/>
<rect x="489.94" y="515.20" width="5.50" height="7.30" fill="#3a58d8"/>
<rect x="495.44" y="515.20" width="5.50" height="7.30" fill="#6a58e8"/>
<rect x="500.94" y="515.20" width="5.50" height="7.30" fill="#8a78f0"/>
<rect x="506.44" y="515.20" width="5.50" height="7.30" fill="#a898f4"/>
<rect x="513.18" y="515.20" width="5.50" height="7.30" fill="#fbb414"/>
<rect x="518.68" y="515.20" width="5.50" height="7.30" fill="#ecd030"/>
<rect x="524.18" y="515.20" width="5.50" height="7.30" fill="#e8dc30"/>
<rect x="529.68" y="515.20" width="5.50" height="7.30" fill="#f4ec50"/>
<rect x="535.18" y="515.20" width="5.50" height="7.30" fill="#f8f080"/>
<rect x="541.92" y="515.20" width="5.50" height="7.30" fill="#9a58e0"/>
<rect x="547.42" y="515.20" width="5.50" height="7.30" fill="#b070ec"/>
<rect x="552.92" y="515.20" width="5.50" height="7.30" fill="#c068f0"/>
<rect x="558.42" y="515.20" width="5.50" height="7.30" fill="#cc90f4"/>
<rect x="563.92" y="515.20" width="5.50" height="7.30" fill="#d8a8f8"/>
<rect x="570.66" y="515.20" width="5.50" height="7.30" fill="#1a7a3a"/>
<rect x="576.16" y="515.20" width="5.50" height="7.30" fill="#3a9a50"/>
<rect x="581.66" y="515.20" width="5.50" height="7.30" fill="#58b068"/>
<rect x="587.16" y="515.20" width="5.50" height="7.30" fill="#78c080"/>
<rect x="592.66" y="515.20" width="5.50" height="7.30" fill="#a8d8b0"/>
<rect x="599.40" y="515.20" width="5.50" height="7.30" fill="#e83030"/>
<rect x="604.90" y="515.20" width="5.50" height="7.30" fill="#f04a4a"/>
<rect x="610.40" y="515.20" width="5.50" height="7.30" fill="#f46a6a"/>
<rect x="615.90" y="515.20" width="5.50" height="7.30" fill="#f88a80"/>
<rect x="621.40" y="515.20" width="5.50" height="7.30" fill="#f8a898"/>
<rect x="628.14" y="515.20" width="5.50" height="7.30" fill="#1a3aa8"/>
<rect x="633.64" y="515.20" width="5.50" height="7.30" fill="#2a5ac8"/>
<rect x="639.14" y="515.20" width="5.50" height="7.30" fill="#3a70e0"/>
<rect x="644.64" y="515.20" width="5.50" height="7.30" fill="#6a98e8"/>
<rect x="650.14" y="515.20" width="5.50" height="7.30" fill="#98b8f0"/>
<rect x="656.88" y="515.20" width="5.50" height="7.30" fill="#7a3000"/>
<rect x="662.38" y="515.20" width="5.50" height="7.30" fill="#a03818"/>
<rect x="667.88" y="515.20" width="5.50" height="7.30" fill="#b84828"/>
<rect x="673.38" y="515.20" width="5.50" height="7.30" fill="#d86040"/>
<rect x="678.88" y="515.20" width="5.50" height="7.30" fill="#e88058"/>
<rect x="685.62" y="515.20" width="5.50" height="7.30" fill="#1a7ae0"/>
<rect x="691.12" y="515.20" width="5.50" height="7.30" fill="#2a90f0"/>
<rect x="696.62" y="515.20" width="5.50" height="7.30" fill="#48a8f4"/>
<rect x="702.12" y="515.20" width="5.50" height="7.30" fill="#50c8f4"/>
<rect x="707.62" y="515.20" width="5.50" height="7.30" fill="#68d8f4"/>
<rect x="714.36" y="515.20" width="5.50" height="7.30" fill="#8a5838"/>
<rect x="719.86" y="515.20" width="5.50" height="7.30" fill="#a86848"/>
<rect x="725.36" y="515.20" width="5.50" height="7.30" fill="#c07850"/>
<rect x="730.86" y="515.20" width="5.50" height="7.30" fill="#d89060"/>
<rect x="736.36" y="515.20" width="5.50" height="7.30" fill="#f0a060"/>
<rect x="743.10" y="515.20" width="5.50" height="7.30" fill="#8a8480"/>
<rect x="748.60" y="515.20" width="5.50" height="7.30" fill="#b8b0a4"/>
<rect x="754.10" y="515.20" width="5.50" height="7.30" fill="#d0c8bc"/>
<rect x="759.60" y="515.20" width="5.50" height="7.30" fill="#e8e4d8"/>
<rect x="765.10" y="515.20" width="5.50" height="7.30" fill="#f4f0e0"/>
<rect x="771.84" y="515.20" width="5.50" height="7.30" fill="#181820"/>
<rect x="777.34" y="515.20" width="5.50" height="7.30" fill="#2a2a30"/>
<rect x="782.84" y="515.20" width="5.50" height="7.30" fill="#404040"/>
<rect x="788.34" y="515.20" width="5.50" height="7.30" fill="#585858"/>
<rect x="793.84" y="515.20" width="5.50" height="7.30" fill="#787878"/>
<rect x="800.58" y="515.20" width="5.50" height="7.30" fill="#b0b0b0"/>
<rect x="806.08" y="515.20" width="5.50" height="7.30" fill="#c8c8c8"/>
<rect x="811.58" y="515.20" width="5.50" height="7.30" fill="#d8d8d8"/>
<rect x="817.08" y="515.20" width="5.50" height="7.30" fill="#e8e8e8"/>
<rect x="822.58" y="515.20" width="5.50" height="7.30" fill="#f4f4f4"/>
<path d="M304 515.500l3 3l-3 3l-3-3zM301.300 519h5.400" stroke="#222" stroke-width="0.8" fill="none"/>
<path d="M301.600 518.900h4.800l-2.400 2.400z" stroke="none" stroke-width="0.7" fill="#222"/>
<path d="M308 520.200h2l-1 1.200z" stroke="none" stroke-width="0.7" fill="#444"/>
<rect x="0.00" y="523.00" width="1000.00" height="18.00" fill="#f6f6f6"/>
<rect x="0.00" y="522.60" width="296.00" height="0.60" fill="#e2e2e2"/>
<line x1="23.60" y1="525.50" x2="23.60" y2="538.50" stroke="#dcdcdc" stroke-width="0.7"/>
<line x1="86.00" y1="525.50" x2="86.00" y2="538.50" stroke="#dcdcdc" stroke-width="0.7"/>
<line x1="108.60" y1="525.50" x2="108.60" y2="538.50" stroke="#dcdcdc" stroke-width="0.7"/>
<line x1="150.40" y1="525.50" x2="150.40" y2="538.50" stroke="#dcdcdc" stroke-width="0.7"/>
<rect x="8.00" y="529.30" width="6.60" height="5.50" fill="none" stroke="#333" stroke-width="0.8"/>
<line x1="6.00" y1="529.00" x2="6.00" y2="535.00" stroke="#333" stroke-width="0.8"/>
<line x1="16.60" y1="529.00" x2="16.60" y2="535.00" stroke="#333" stroke-width="0.8"/>
<text x="28.60" y="532.20" font-size="7" fill="#222" textLength="19.00" lengthAdjust="spacingAndGlyphs" dominant-baseline="central">Page-1</text>
<path d="M79 531.300h2.400l-1.200 1.500z" stroke="none" stroke-width="0.7" fill="#666"/>
<path d="M94 532h5.200M96.600 529.400v5.200" stroke="#222" stroke-width="0.9" fill="none"/>
<text x="119.40" y="532.20" font-size="7" fill="#1a73e8" textLength="20.00" lengthAdjust="spacingAndGlyphs" dominant-baseline="central" font-weight="bold">Page-1</text>
<path d="M816.500 530.300v-1.700h1.700M820.300 528.600h1.700v1.700M822 534.300v1.700h-1.700M818.200 536h-1.700v-1.700" stroke="#333" stroke-width="0.7" fill="none"/>
<circle cx="819.25" cy="532.30" r="1.20" fill="#333"/>
<text x="828.50" y="532.30" font-size="7" fill="#222" textLength="15.50" lengthAdjust="spacingAndGlyphs" dominant-baseline="central">Focus</text>
<circle cx="857.00" cy="532.20" r="3.60" fill="none" stroke="#333" stroke-width="0.7"/>
<path d="M856 530.600l2.600 1.600l-2.600 1.600z" stroke="none" stroke-width="0.7" fill="#333"/>
<line x1="867.50" y1="532.20" x2="872.00" y2="532.20" stroke="#333" stroke-width="0.9"/>
<line x1="876.50" y1="532.20" x2="919.00" y2="532.20" stroke="#bbb" stroke-width="1"/>
<circle cx="887.60" cy="532.20" r="2.60" fill="#fff" stroke="#555" stroke-width="0.8"/>
<path d="M922.300 532.200h4.800M924.700 529.800v4.800" stroke="#333" stroke-width="0.9" fill="none"/>
<text x="934.90" y="532.30" font-size="7" fill="#222" textLength="14.40" lengthAdjust="spacingAndGlyphs" dominant-baseline="central">100%</text>
<path d="M952.600 531.600h2.200l-1.100 1.400z" stroke="none" stroke-width="0.7" fill="#666"/>
<path d="M966 530.500v-1.800h1.800M969.400 528.700h1.800v1.800M971.200 533.700v1.800h-1.800M967.800 535.500h-1.800v-1.800" stroke="#222" stroke-width="0.9" fill="none"/>
<rect x="978.00" y="528.80" width="6.50" height="6.60" fill="none" stroke="#222" stroke-width="0.9"/>
<path d="M979.300 532.100h3.800M980.500 531l-1.200 1.100l1.200 1.100M982 531l1.200 1.100l-1.200 1.100" stroke="#222" stroke-width="0.6" fill="none"/>
<clipPath id="fmc"><rect x="0" y="39" width="310" height="250"/></clipPath><g clip-path="url(#fmc)">
<rect x="0.00" y="39.00" width="310.00" height="250.00" fill="#fff"/>
<rect x="0.00" y="39.00" width="70.00" height="250.00" fill="#0a75e7"/>
<circle cx="24.30" cy="40.80" r="7.60" fill="none" stroke="#fff" stroke-width="0.95"/>
<path d="M21 40.800h6.500M23.500 38.300l-2.500 2.500l2.500 2.500" stroke="#fff" stroke-width="0.9" fill="none"/>
<rect x="1.30" y="195.60" width="65.70" height="18.00" fill="#0a5cc8"/>
<text x="16.80" y="78.00" font-size="6.5" fill="#fff" textLength="10.90" lengthAdjust="spacingAndGlyphs" dominant-baseline="central">New</text>
<text x="16.80" y="96.40" font-size="6.5" fill="#fff" textLength="12.50" lengthAdjust="spacingAndGlyphs" dominant-baseline="central">Open</text>
<text x="16.80" y="114.60" font-size="6.5" fill="#fff" textLength="16.00" lengthAdjust="spacingAndGlyphs" dominant-baseline="central">Import</text>
<text x="16.80" y="132.90" font-size="6.5" fill="#fff" textLength="44.20" lengthAdjust="spacingAndGlyphs" dominant-baseline="central">Cloud Documents</text>
<text x="16.80" y="150.70" font-size="6.5" fill="#fff" textLength="24.00" lengthAdjust="spacingAndGlyphs" dominant-baseline="central">Templates</text>
<text x="16.80" y="168.60" font-size="6.5" fill="#6fb0f5" textLength="11.00" lengthAdjust="spacingAndGlyphs" dominant-baseline="central">Save</text>
<text x="16.80" y="186.80" font-size="6.5" fill="#fff" textLength="18.20" lengthAdjust="spacingAndGlyphs" dominant-baseline="central">Save As</text>
<text x="16.80" y="204.80" font-size="6.5" fill="#fff" textLength="35.70" lengthAdjust="spacingAndGlyphs" dominant-baseline="central">Export &amp; Send</text>
<text x="16.80" y="223.00" font-size="6.5" fill="#fff" textLength="11.50" lengthAdjust="spacingAndGlyphs" dominant-baseline="central">Print</text>
<path d="M53 77.800h6.600M56.300 74.500v6.600" stroke="#fff" stroke-width="0.8" fill="none"/>
<rect x="45.50" y="147.60" width="14.50" height="6.00" fill="#f0483e" rx="1.5"/>
<text x="52.70" y="150.70" font-size="4.8" fill="#fff" textLength="9.50" lengthAdjust="spacingAndGlyphs" dominant-baseline="central" font-weight="bold" text-anchor="middle">NEW</text>
<circle cx="19.30" cy="241.20" r="2.50" fill="#fff"/>
<rect x="17.80" y="240.70" width="3.00" height="1.00" fill="#0a75e7"/>
<text x="25.70" y="241.40" font-size="6.8" fill="#fff" textLength="8.50" lengthAdjust="spacingAndGlyphs" dominant-baseline="central">Exit</text>
<text x="78.90" y="49.50" font-size="9.6" fill="#111" textLength="26.50" lengthAdjust="spacingAndGlyphs" dominant-baseline="central" font-weight="bold">Export</text>
<line x1="70.00" y1="60.80" x2="310.00" y2="60.80" stroke="#e6e6e6" stroke-width="0.7"/>
<line x1="167.60" y1="60.80" x2="167.60" y2="289.00" stroke="#e6e6e6" stroke-width="0.7"/>
<pattern id="hl" width="2" height="2" patternUnits="userSpaceOnUse"><rect width="2" height="2" fill="#e9f3fe"/><rect width="1" height="1" fill="#dcebfb"/></pattern>
<rect x="75.00" y="73.30" width="90.00" height="16.70" fill="url(#hl)"/>
<rect x="75.00" y="109.30" width="88.00" height="18.10" fill="#e9f3fe" rx="1.5"/>
<rect x="162.00" y="76.40" width="1.40" height="10.10" fill="#1a6fe0"/>
<path d="M79.60 76.10h5.500l2.500 2.500v8.500h-8z" stroke="#d6d6d6" stroke-width="0.5" fill="#fafafa"/>
<rect x="76.80" y="78.50" width="8.60" height="5.00" fill="#1f9e7a" rx="0.9"/>
<text x="81.10" y="81.10" font-size="3.6" fill="#fff" textLength="6.30" lengthAdjust="spacingAndGlyphs" dominant-baseline="central" font-weight="bold" text-anchor="middle">JPG</text>
<text x="93.80" y="81.80" font-size="6.5" fill="#1a6fe0" textLength="22.00" lengthAdjust="spacingAndGlyphs" dominant-baseline="central">Graphics</text>
<path d="M79.60 94.50h5.500l2.500 2.500v8.500h-8z" stroke="#d6d6d6" stroke-width="0.5" fill="#fafafa"/>
<rect x="76.80" y="96.90" width="8.60" height="5.00" fill="#ee4444" rx="0.9"/>
<text x="81.10" y="99.50" font-size="3.6" fill="#fff" textLength="6.30" lengthAdjust="spacingAndGlyphs" dominant-baseline="central" font-weight="bold" text-anchor="middle">PDF</text>
<text x="93.80" y="100.20" font-size="6.5" fill="#222" textLength="30.50" lengthAdjust="spacingAndGlyphs" dominant-baseline="central">PDF, PS, EPS</text>
<path d="M79.60 113.20h5.500l2.500 2.500v8.500h-8z" stroke="#d6d6d6" stroke-width="0.5" fill="#fafafa"/>
<rect x="76.80" y="115.60" width="8.60" height="5.00" fill="#2a7de8" rx="0.9"/>
<text x="81.10" y="118.20" font-size="3.6" fill="#fff" textLength="2.90" lengthAdjust="spacingAndGlyphs" dominant-baseline="central" font-weight="bold" text-anchor="middle">W</text>
<text x="93.80" y="118.90" font-size="6.5" fill="#1a6fe0" textLength="15.50" lengthAdjust="spacingAndGlyphs" dominant-baseline="central">Office</text>
<path d="M79.60 131.50h5.500l2.500 2.500v8.500h-8z" stroke="#d6d6d6" stroke-width="0.5" fill="#fafafa"/>
<rect x="76.80" y="133.90" width="8.60" height="5.00" fill="#1f9e7a" rx="0.9"/>
<text x="81.10" y="136.50" font-size="3.6" fill="#fff" textLength="6.40" lengthAdjust="spacingAndGlyphs" dominant-baseline="central" font-weight="bold" text-anchor="middle">HTML</text>
<text x="93.80" y="137.20" font-size="6.5" fill="#222" textLength="12.50" lengthAdjust="spacingAndGlyphs" dominant-baseline="central">Html</text>
<path d="M79.60 150.00h5.500l2.500 2.500v8.500h-8z" stroke="#d6d6d6" stroke-width="0.5" fill="#fafafa"/>
<rect x="76.80" y="152.40" width="8.60" height="5.00" fill="#7a55e0" rx="0.9"/>
<text x="81.10" y="155.00" font-size="3.6" fill="#fff" textLength="6.30" lengthAdjust="spacingAndGlyphs" dominant-baseline="central" font-weight="bold" text-anchor="middle">SVG</text>
<text x="93.80" y="155.70" font-size="6.5" fill="#222" textLength="10.00" lengthAdjust="spacingAndGlyphs" dominant-baseline="central">SVG</text>
<path d="M79.60 168.60h5.500l2.500 2.500v8.500h-8z" stroke="#d6d6d6" stroke-width="0.5" fill="#fafafa"/>
<rect x="76.80" y="171.00" width="8.60" height="5.00" fill="#2266cc" rx="0.9"/>
<text x="81.10" y="173.60" font-size="3.6" fill="#fff" textLength="2.90" lengthAdjust="spacingAndGlyphs" dominant-baseline="central" font-weight="bold" text-anchor="middle">V</text>
<text x="93.80" y="174.30" font-size="6.5" fill="#222" textLength="11.50" lengthAdjust="spacingAndGlyphs" dominant-baseline="central">Visio</text>
<line x1="70.00" y1="220.50" x2="167.60" y2="220.50" stroke="#e6e6e6" stroke-width="0.7"/>
<text x="79.00" y="233.70" font-size="9.6" fill="#111" textLength="19.50" lengthAdjust="spacingAndGlyphs" dominant-baseline="central" font-weight="bold">Send</text>
<rect x="78.00" y="256.60" width="8.60" height="6.60" fill="none" stroke="#222" stroke-width="0.8" rx="0.6"/>
<path d="M78 257l4.300 3.200l4.300-3.200" stroke="#222" stroke-width="0.7" fill="none"/>
<path d="M84.500 262.600h3M86.300 261.200l1.400 1.400l-1.400 1.400" stroke="#222" stroke-width="0.7" fill="none"/>
<text x="93.90" y="260.00" font-size="6.4" fill="#222" textLength="26.80" lengthAdjust="spacingAndGlyphs" dominant-baseline="central">Send Email</text>
<text x="181.60" y="49.50" font-size="9.6" fill="#111" textLength="74.00" lengthAdjust="spacingAndGlyphs" dominant-baseline="central" font-weight="bold">Export to Graphics</text>
<text x="182.50" y="79.50" font-size="6.3" fill="#111" textLength="120.00" lengthAdjust="spacingAndGlyphs" dominant-baseline="central">Save image files, such as jpg, jpeg, png, bmp, gif.</text>
<rect x="182.20" y="94.30" width="51.20" height="41.10" fill="#fff" stroke="#dcdcdc" stroke-width="0.7"/>
<path d="M205.70 97.10h5.500l2.500 2.500v8.500h-8z" stroke="#d6d6d6" stroke-width="0.5" fill="#fafafa"/>
<rect x="202.90" y="99.50" width="8.60" height="5.00" fill="#1f9e7a" rx="0.9"/>
<text x="207.20" y="102.10" font-size="3.6" fill="#fff" textLength="6.30" lengthAdjust="spacingAndGlyphs" dominant-baseline="central" font-weight="bold" text-anchor="middle">JPG</text>
<text x="207.80" y="120.00" font-size="6.4" fill="#444" textLength="21.00" lengthAdjust="spacingAndGlyphs" dominant-baseline="central" text-anchor="middle">Graphics</text>
<text x="207.80" y="128.60" font-size="6.4" fill="#444" textLength="46.00" lengthAdjust="spacingAndGlyphs" dominant-baseline="central" text-anchor="middle">*.jpg,*.jpeg,*.png...</text>
<text x="182.50" y="151.40" font-size="6.3" fill="#111" textLength="116.50" lengthAdjust="spacingAndGlyphs" dominant-baseline="central">Save to the graphics file to mutiple page tiff file.</text>
<rect x="182.20" y="166.50" width="51.20" height="40.80" fill="#fff" stroke="#dcdcdc" stroke-width="0.7"/>
<path d="M205.70 168.50h5.500l2.500 2.500v8.500h-8z" stroke="#d6d6d6" stroke-width="0.5" fill="#fafafa"/>
<rect x="202.90" y="170.90" width="8.60" height="5.00" fill="#2a9ad8" rx="0.9"/>
<text x="207.20" y="173.50" font-size="3.6" fill="#fff" textLength="6.40" lengthAdjust="spacingAndGlyphs" dominant-baseline="central" font-weight="bold" text-anchor="middle">TIFF</text>
<text x="207.80" y="191.60" font-size="6.4" fill="#444" textLength="7.50" lengthAdjust="spacingAndGlyphs" dominant-baseline="central" text-anchor="middle">Tiff</text>
<text x="207.80" y="200.20" font-size="6.4" fill="#444" textLength="15.00" lengthAdjust="spacingAndGlyphs" dominant-baseline="central" text-anchor="middle">(*.tiff)</text>
</g>
<rect x="1.30" y="16.30" width="37.20" height="17.60" fill="none" stroke="#e11e2a" stroke-width="0.9"/>
<polygon points="84.8,9.3 51.5,17.2 53.3,13.3 42.5,22.5 56.6,24.3 52.9,22.0 85.2,10.7" fill="#e11e2a"/>
<rect x="174.20" y="1.20" width="40.50" height="13.30" fill="none" stroke="#e11e2a" stroke-width="0.9"/>
<polygon points="357.0,1.3 231.2,4.9 233.5,1.3 222.7,7.5 233.9,12.8 231.4,9.4 357.0,2.7" fill="#e11e2a"/>
<rect x="879.30" y="14.00" width="77.00" height="19.30" fill="none" stroke="#e11e2a" stroke-width="0.9"/>
<polygon points="673.0,11.6 866.9,25.6 864.2,28.5 876.0,24.0 864.9,18.0 867.2,21.2 673.0,10.4" fill="#e11e2a"/>
<rect x="74.30" y="71.40" width="91.20" height="111.90" fill="none" stroke="#e11e2a" stroke-width="0.9"/>
<polygon points="256.0,56.5 175.2,88.4 176.4,84.8 168.0,93.4 180.0,93.6 176.7,91.9 256.4,57.5" fill="#e11e2a"/>
<rect x="1.30" y="195.60" width="65.70" height="18.00" fill="none" stroke="#c02a50" stroke-width="0.9"/>
<polygon points="52.7,152.1 17.4,180.6 17.4,177.3 12.6,187.0 23.0,183.7 19.6,183.2 53.3,152.9" fill="#e11e2a"/>
</svg>
</body></html>
